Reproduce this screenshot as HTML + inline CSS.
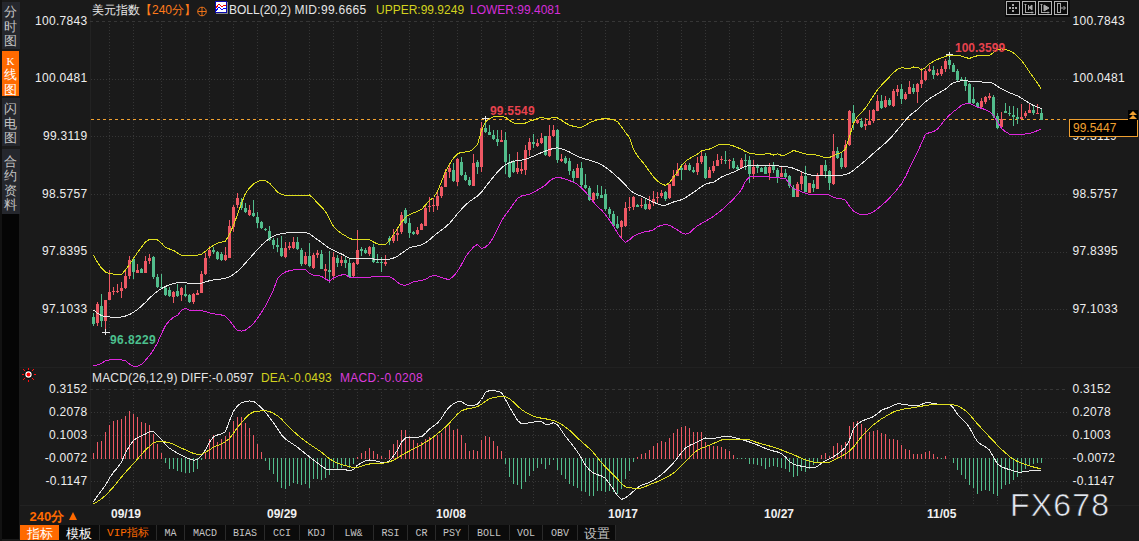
<!DOCTYPE html>
<html><head><meta charset="utf-8">
<style>
html,body{margin:0;padding:0;}
body{width:1139px;height:541px;overflow:hidden;background:#1a1a1a;position:relative;font-family:"Liberation Sans",sans-serif;}
.a{position:absolute;white-space:nowrap;}
.lbl{position:absolute;font-size:12px;color:#eeeeee;line-height:14px;letter-spacing:0.3px;}
.ll{position:absolute;left:0;width:87.5px;text-align:right;font-size:12px;color:#eeeeee;line-height:14px;letter-spacing:0.3px;}
.side{position:absolute;left:2px;width:18px;text-indent:-2px;background:#25272d;color:#c4c4c4;font-size:12px;line-height:14px;text-align:center;}
.tb{position:absolute;top:525px;height:15px;background:#0b0b0b;color:#c4c4c4;font-family:"Liberation Mono",monospace;font-size:10px;line-height:17px;text-align:center;border-right:1px solid #2a2a2a;box-sizing:border-box;}
</style></head><body>
<div class="a" style="left:0;top:0;width:2px;height:541px;background:#121212"></div>
<div class="a" style="left:2px;top:2px;width:18px;height:47px;background:#25272d"></div>
<div class="a" style="left:2px;top:51px;width:17px;height:45px;background:#ff6a00"></div>
<div class="a" style="left:2px;top:98px;width:18px;height:48px;background:#25272d"></div>
<div class="a" style="left:2px;top:149px;width:18px;height:65px;background:#25272d"></div>
<div class="a" style="left:4px;top:6.2px;font-size:12.5px;line-height:12px;color:#c4c4c4">分</div>
<div class="a" style="left:4px;top:20.5px;font-size:12.5px;line-height:12px;color:#c4c4c4">时</div>
<div class="a" style="left:4px;top:34.8px;font-size:12.5px;line-height:12px;color:#c4c4c4">图</div>
<div class="a" style="left:4px;top:68.9px;font-size:12.5px;line-height:12px;color:#fff">线</div>
<div class="a" style="left:4px;top:83.5px;font-size:12.5px;line-height:12px;color:#fff">图</div>
<div class="a" style="left:4px;top:103.4px;font-size:12.5px;line-height:12px;color:#c4c4c4">闪</div>
<div class="a" style="left:4px;top:117.6px;font-size:12.5px;line-height:12px;color:#c4c4c4">电</div>
<div class="a" style="left:4px;top:131.8px;font-size:12.5px;line-height:12px;color:#c4c4c4">图</div>
<div class="a" style="left:4px;top:156.1px;font-size:12.5px;line-height:12px;color:#c4c4c4">合</div>
<div class="a" style="left:4px;top:170.3px;font-size:12.5px;line-height:12px;color:#c4c4c4">约</div>
<div class="a" style="left:4px;top:184.5px;font-size:12.5px;line-height:12px;color:#c4c4c4">资</div>
<div class="a" style="left:4px;top:198.7px;font-size:12.5px;line-height:12px;color:#c4c4c4">料</div>
<div class="a" style="left:6.5px;top:55px;font-family:'Liberation Serif',serif;font-size:11px;line-height:12px;color:#fff">K</div>
<div class="a" style="left:2px;top:214px;width:17px;height:325px;background:#050505"></div>

<svg class="a" style="left:0;top:0" width="1139" height="541" shape-rendering="crispEdges">
<line x1="90.5" y1="10" x2="90.5" y2="505" stroke="#222"/>
<line x1="20" y1="367.5" x2="1139" y2="367.5" stroke="#212121"/>
<line x1="20" y1="505.5" x2="1139" y2="505.5" stroke="#222"/>
<g>
<line x1="90" y1="21.5" x2="1067" y2="21.5" stroke="#363636" stroke-dasharray="3 3"/>
<line x1="91" y1="79.5" x2="1067" y2="79.5" stroke="#363636" stroke-dasharray="1 2"/>
<line x1="91" y1="136.5" x2="1067" y2="136.5" stroke="#363636" stroke-dasharray="1 2"/>
<line x1="91" y1="194.5" x2="1067" y2="194.5" stroke="#363636" stroke-dasharray="1 2"/>
<line x1="91" y1="252.5" x2="1067" y2="252.5" stroke="#363636" stroke-dasharray="1 2"/>
<line x1="91" y1="309.5" x2="1067" y2="309.5" stroke="#363636" stroke-dasharray="1 2"/>
<line x1="90" y1="389.5" x2="1067" y2="389.5" stroke="#363636" stroke-dasharray="3 3"/>
<line x1="91" y1="412.5" x2="1067" y2="412.5" stroke="#363636" stroke-dasharray="1 2"/>
<line x1="91" y1="435.5" x2="1067" y2="435.5" stroke="#363636" stroke-dasharray="1 2"/>
<line x1="91" y1="458.5" x2="1067" y2="458.5" stroke="#363636" stroke-dasharray="1 2"/>
<line x1="91" y1="481.5" x2="1067" y2="481.5" stroke="#363636" stroke-dasharray="1 2"/>
<line x1="109.5" y1="21" x2="109.5" y2="366" stroke="#363636" stroke-dasharray="1 2"/>
<line x1="109.5" y1="389" x2="109.5" y2="505" stroke="#363636" stroke-dasharray="1 2"/>
<line x1="133.5" y1="21" x2="133.5" y2="366" stroke="#363636" stroke-dasharray="1 2"/>
<line x1="133.5" y1="389" x2="133.5" y2="505" stroke="#363636" stroke-dasharray="1 2"/>
<line x1="161.5" y1="21" x2="161.5" y2="366" stroke="#363636" stroke-dasharray="1 2"/>
<line x1="161.5" y1="389" x2="161.5" y2="505" stroke="#363636" stroke-dasharray="1 2"/>
<line x1="185.5" y1="21" x2="185.5" y2="366" stroke="#363636" stroke-dasharray="1 2"/>
<line x1="185.5" y1="389" x2="185.5" y2="505" stroke="#363636" stroke-dasharray="1 2"/>
<line x1="209.5" y1="21" x2="209.5" y2="366" stroke="#363636" stroke-dasharray="1 2"/>
<line x1="209.5" y1="389" x2="209.5" y2="505" stroke="#363636" stroke-dasharray="1 2"/>
<line x1="233.5" y1="21" x2="233.5" y2="366" stroke="#363636" stroke-dasharray="1 2"/>
<line x1="233.5" y1="389" x2="233.5" y2="505" stroke="#363636" stroke-dasharray="1 2"/>
<line x1="257.5" y1="21" x2="257.5" y2="366" stroke="#363636" stroke-dasharray="1 2"/>
<line x1="257.5" y1="389" x2="257.5" y2="505" stroke="#363636" stroke-dasharray="1 2"/>
<line x1="285.5" y1="21" x2="285.5" y2="366" stroke="#363636" stroke-dasharray="1 2"/>
<line x1="285.5" y1="389" x2="285.5" y2="505" stroke="#363636" stroke-dasharray="1 2"/>
<line x1="309.5" y1="21" x2="309.5" y2="366" stroke="#363636" stroke-dasharray="1 2"/>
<line x1="309.5" y1="389" x2="309.5" y2="505" stroke="#363636" stroke-dasharray="1 2"/>
<line x1="333.5" y1="21" x2="333.5" y2="366" stroke="#363636" stroke-dasharray="1 2"/>
<line x1="333.5" y1="389" x2="333.5" y2="505" stroke="#363636" stroke-dasharray="1 2"/>
<line x1="357.5" y1="21" x2="357.5" y2="366" stroke="#363636" stroke-dasharray="1 2"/>
<line x1="357.5" y1="389" x2="357.5" y2="505" stroke="#363636" stroke-dasharray="1 2"/>
<line x1="381.5" y1="21" x2="381.5" y2="366" stroke="#363636" stroke-dasharray="1 2"/>
<line x1="381.5" y1="389" x2="381.5" y2="505" stroke="#363636" stroke-dasharray="1 2"/>
<line x1="409.5" y1="21" x2="409.5" y2="366" stroke="#363636" stroke-dasharray="1 2"/>
<line x1="409.5" y1="389" x2="409.5" y2="505" stroke="#363636" stroke-dasharray="1 2"/>
<line x1="433.5" y1="21" x2="433.5" y2="366" stroke="#363636" stroke-dasharray="1 2"/>
<line x1="433.5" y1="389" x2="433.5" y2="505" stroke="#363636" stroke-dasharray="1 2"/>
<line x1="457.5" y1="21" x2="457.5" y2="366" stroke="#363636" stroke-dasharray="1 2"/>
<line x1="457.5" y1="389" x2="457.5" y2="505" stroke="#363636" stroke-dasharray="1 2"/>
<line x1="481.5" y1="21" x2="481.5" y2="366" stroke="#363636" stroke-dasharray="1 2"/>
<line x1="481.5" y1="389" x2="481.5" y2="505" stroke="#363636" stroke-dasharray="1 2"/>
<line x1="505.5" y1="21" x2="505.5" y2="366" stroke="#363636" stroke-dasharray="1 2"/>
<line x1="505.5" y1="389" x2="505.5" y2="505" stroke="#363636" stroke-dasharray="1 2"/>
<line x1="533.5" y1="21" x2="533.5" y2="366" stroke="#363636" stroke-dasharray="1 2"/>
<line x1="533.5" y1="389" x2="533.5" y2="505" stroke="#363636" stroke-dasharray="1 2"/>
<line x1="557.5" y1="21" x2="557.5" y2="366" stroke="#363636" stroke-dasharray="1 2"/>
<line x1="557.5" y1="389" x2="557.5" y2="505" stroke="#363636" stroke-dasharray="1 2"/>
<line x1="581.5" y1="21" x2="581.5" y2="366" stroke="#363636" stroke-dasharray="1 2"/>
<line x1="581.5" y1="389" x2="581.5" y2="505" stroke="#363636" stroke-dasharray="1 2"/>
<line x1="605.5" y1="21" x2="605.5" y2="366" stroke="#363636" stroke-dasharray="1 2"/>
<line x1="605.5" y1="389" x2="605.5" y2="505" stroke="#363636" stroke-dasharray="1 2"/>
<line x1="629.5" y1="21" x2="629.5" y2="366" stroke="#363636" stroke-dasharray="1 2"/>
<line x1="629.5" y1="389" x2="629.5" y2="505" stroke="#363636" stroke-dasharray="1 2"/>
<line x1="657.5" y1="21" x2="657.5" y2="366" stroke="#363636" stroke-dasharray="1 2"/>
<line x1="657.5" y1="389" x2="657.5" y2="505" stroke="#363636" stroke-dasharray="1 2"/>
<line x1="681.5" y1="21" x2="681.5" y2="366" stroke="#363636" stroke-dasharray="1 2"/>
<line x1="681.5" y1="389" x2="681.5" y2="505" stroke="#363636" stroke-dasharray="1 2"/>
<line x1="705.5" y1="21" x2="705.5" y2="366" stroke="#363636" stroke-dasharray="1 2"/>
<line x1="705.5" y1="389" x2="705.5" y2="505" stroke="#363636" stroke-dasharray="1 2"/>
<line x1="729.5" y1="21" x2="729.5" y2="366" stroke="#363636" stroke-dasharray="1 2"/>
<line x1="729.5" y1="389" x2="729.5" y2="505" stroke="#363636" stroke-dasharray="1 2"/>
<line x1="753.5" y1="21" x2="753.5" y2="366" stroke="#363636" stroke-dasharray="1 2"/>
<line x1="753.5" y1="389" x2="753.5" y2="505" stroke="#363636" stroke-dasharray="1 2"/>
<line x1="781.5" y1="21" x2="781.5" y2="366" stroke="#363636" stroke-dasharray="1 2"/>
<line x1="781.5" y1="389" x2="781.5" y2="505" stroke="#363636" stroke-dasharray="1 2"/>
<line x1="805.5" y1="21" x2="805.5" y2="366" stroke="#363636" stroke-dasharray="1 2"/>
<line x1="805.5" y1="389" x2="805.5" y2="505" stroke="#363636" stroke-dasharray="1 2"/>
<line x1="829.5" y1="21" x2="829.5" y2="366" stroke="#363636" stroke-dasharray="1 2"/>
<line x1="829.5" y1="389" x2="829.5" y2="505" stroke="#363636" stroke-dasharray="1 2"/>
<line x1="853.5" y1="21" x2="853.5" y2="366" stroke="#363636" stroke-dasharray="1 2"/>
<line x1="853.5" y1="389" x2="853.5" y2="505" stroke="#363636" stroke-dasharray="1 2"/>
<line x1="877.5" y1="21" x2="877.5" y2="366" stroke="#363636" stroke-dasharray="1 2"/>
<line x1="877.5" y1="389" x2="877.5" y2="505" stroke="#363636" stroke-dasharray="1 2"/>
<line x1="901.5" y1="21" x2="901.5" y2="366" stroke="#363636" stroke-dasharray="1 2"/>
<line x1="901.5" y1="389" x2="901.5" y2="505" stroke="#363636" stroke-dasharray="1 2"/>
<line x1="925.5" y1="21" x2="925.5" y2="366" stroke="#363636" stroke-dasharray="1 2"/>
<line x1="925.5" y1="389" x2="925.5" y2="505" stroke="#363636" stroke-dasharray="1 2"/>
<line x1="949.5" y1="21" x2="949.5" y2="366" stroke="#363636" stroke-dasharray="1 2"/>
<line x1="949.5" y1="389" x2="949.5" y2="505" stroke="#363636" stroke-dasharray="1 2"/>
<line x1="973.5" y1="21" x2="973.5" y2="366" stroke="#363636" stroke-dasharray="1 2"/>
<line x1="973.5" y1="389" x2="973.5" y2="505" stroke="#363636" stroke-dasharray="1 2"/>
<line x1="997.5" y1="21" x2="997.5" y2="366" stroke="#363636" stroke-dasharray="1 2"/>
<line x1="997.5" y1="389" x2="997.5" y2="505" stroke="#363636" stroke-dasharray="1 2"/>
<line x1="1021.5" y1="21" x2="1021.5" y2="366" stroke="#363636" stroke-dasharray="1 2"/>
<line x1="1021.5" y1="389" x2="1021.5" y2="505" stroke="#363636" stroke-dasharray="1 2"/>
<line x1="91" y1="119.5" x2="1069" y2="119.5" stroke="#f0a030" stroke-dasharray="3 3"/>
<line x1="93.5" y1="313" x2="93.5" y2="326" stroke="#52bd8c"/>
<rect x="92" y="317" width="3" height="7" fill="#52bd8c"/>
<line x1="97.5" y1="302" x2="97.5" y2="326" stroke="#ee5864"/>
<rect x="96" y="304" width="3" height="19" fill="#ee5864"/>
<line x1="101.5" y1="294" x2="101.5" y2="327" stroke="#52bd8c"/>
<rect x="100" y="306" width="3" height="15" fill="#52bd8c"/>
<line x1="105.5" y1="300" x2="105.5" y2="332" stroke="#ee5864"/>
<rect x="104" y="300" width="3" height="21" fill="#ee5864"/>
<line x1="109.5" y1="270" x2="109.5" y2="300" stroke="#ee5864"/>
<rect x="108" y="292" width="3" height="8" fill="#ee5864"/>
<line x1="113.5" y1="287" x2="113.5" y2="295" stroke="#ee5864"/>
<rect x="112" y="291" width="3" height="1" fill="#ee5864"/>
<line x1="117.5" y1="284" x2="117.5" y2="293" stroke="#ee5864"/>
<rect x="116" y="291" width="3" height="1" fill="#ee5864"/>
<line x1="121.5" y1="282" x2="121.5" y2="298" stroke="#ee5864"/>
<rect x="120" y="288" width="3" height="3" fill="#ee5864"/>
<line x1="125.5" y1="271" x2="125.5" y2="289" stroke="#ee5864"/>
<rect x="124" y="276" width="3" height="12" fill="#ee5864"/>
<line x1="129.5" y1="256" x2="129.5" y2="279" stroke="#ee5864"/>
<rect x="128" y="260" width="3" height="16" fill="#ee5864"/>
<line x1="133.5" y1="258" x2="133.5" y2="279" stroke="#52bd8c"/>
<rect x="132" y="259" width="3" height="13" fill="#52bd8c"/>
<line x1="137.5" y1="264" x2="137.5" y2="273" stroke="#ee5864"/>
<rect x="136" y="270" width="3" height="3" fill="#ee5864"/>
<line x1="141.5" y1="268" x2="141.5" y2="273" stroke="#52bd8c"/>
<rect x="140" y="269" width="3" height="4" fill="#52bd8c"/>
<line x1="145.5" y1="256" x2="145.5" y2="273" stroke="#ee5864"/>
<rect x="144" y="261" width="3" height="12" fill="#ee5864"/>
<line x1="149.5" y1="254" x2="149.5" y2="264" stroke="#ee5864"/>
<rect x="148" y="258" width="3" height="3" fill="#ee5864"/>
<line x1="153.5" y1="256" x2="153.5" y2="279" stroke="#52bd8c"/>
<rect x="152" y="257" width="3" height="20" fill="#52bd8c"/>
<line x1="157.5" y1="274" x2="157.5" y2="288" stroke="#52bd8c"/>
<rect x="156" y="277" width="3" height="10" fill="#52bd8c"/>
<line x1="161.5" y1="274" x2="161.5" y2="288" stroke="#52bd8c"/>
<rect x="160" y="287" width="3" height="1" fill="#52bd8c"/>
<line x1="165.5" y1="287" x2="165.5" y2="296" stroke="#52bd8c"/>
<rect x="164" y="288" width="3" height="7" fill="#52bd8c"/>
<line x1="169.5" y1="287" x2="169.5" y2="297" stroke="#52bd8c"/>
<rect x="168" y="290" width="3" height="6" fill="#52bd8c"/>
<line x1="173.5" y1="291" x2="173.5" y2="303" stroke="#ee5864"/>
<rect x="172" y="292" width="3" height="5" fill="#ee5864"/>
<line x1="177.5" y1="284" x2="177.5" y2="297" stroke="#52bd8c"/>
<rect x="176" y="291" width="3" height="5" fill="#52bd8c"/>
<line x1="181.5" y1="287" x2="181.5" y2="301" stroke="#ee5864"/>
<rect x="180" y="288" width="3" height="7" fill="#ee5864"/>
<line x1="185.5" y1="285" x2="185.5" y2="297" stroke="#52bd8c"/>
<rect x="184" y="294" width="3" height="2" fill="#52bd8c"/>
<line x1="189.5" y1="294" x2="189.5" y2="303" stroke="#52bd8c"/>
<rect x="188" y="295" width="3" height="7" fill="#52bd8c"/>
<line x1="193.5" y1="293" x2="193.5" y2="304" stroke="#ee5864"/>
<rect x="192" y="294" width="3" height="8" fill="#ee5864"/>
<line x1="197.5" y1="290" x2="197.5" y2="295" stroke="#ee5864"/>
<rect x="196" y="293" width="3" height="2" fill="#ee5864"/>
<line x1="201.5" y1="271" x2="201.5" y2="293" stroke="#ee5864"/>
<rect x="200" y="274" width="3" height="19" fill="#ee5864"/>
<line x1="205.5" y1="253" x2="205.5" y2="275" stroke="#ee5864"/>
<rect x="204" y="258" width="3" height="16" fill="#ee5864"/>
<line x1="209.5" y1="246" x2="209.5" y2="258" stroke="#ee5864"/>
<rect x="208" y="250" width="3" height="6" fill="#ee5864"/>
<line x1="213.5" y1="247" x2="213.5" y2="254" stroke="#52bd8c"/>
<rect x="212" y="250" width="3" height="2" fill="#52bd8c"/>
<line x1="217.5" y1="251" x2="217.5" y2="260" stroke="#52bd8c"/>
<rect x="216" y="252" width="3" height="7" fill="#52bd8c"/>
<line x1="221.5" y1="252" x2="221.5" y2="261" stroke="#52bd8c"/>
<rect x="220" y="254" width="3" height="6" fill="#52bd8c"/>
<line x1="225.5" y1="247" x2="225.5" y2="261" stroke="#ee5864"/>
<rect x="224" y="255" width="3" height="5" fill="#ee5864"/>
<line x1="229.5" y1="220" x2="229.5" y2="258" stroke="#ee5864"/>
<rect x="228" y="226" width="3" height="32" fill="#ee5864"/>
<line x1="233.5" y1="205" x2="233.5" y2="232" stroke="#ee5864"/>
<rect x="232" y="207" width="3" height="20" fill="#ee5864"/>
<line x1="237.5" y1="193" x2="237.5" y2="208" stroke="#ee5864"/>
<rect x="236" y="198" width="3" height="7" fill="#ee5864"/>
<line x1="241.5" y1="198" x2="241.5" y2="210" stroke="#52bd8c"/>
<rect x="240" y="202" width="3" height="6" fill="#52bd8c"/>
<line x1="245.5" y1="203" x2="245.5" y2="213" stroke="#52bd8c"/>
<rect x="244" y="208" width="3" height="4" fill="#52bd8c"/>
<line x1="249.5" y1="205" x2="249.5" y2="216" stroke="#ee5864"/>
<rect x="248" y="210" width="3" height="5" fill="#ee5864"/>
<line x1="253.5" y1="200" x2="253.5" y2="217" stroke="#52bd8c"/>
<rect x="252" y="213" width="3" height="3" fill="#52bd8c"/>
<line x1="257.5" y1="212" x2="257.5" y2="228" stroke="#52bd8c"/>
<rect x="256" y="217" width="3" height="6" fill="#52bd8c"/>
<line x1="261.5" y1="221" x2="261.5" y2="229" stroke="#52bd8c"/>
<rect x="260" y="222" width="3" height="6" fill="#52bd8c"/>
<line x1="265.5" y1="228" x2="265.5" y2="231" stroke="#52bd8c"/>
<rect x="264" y="229" width="3" height="1" fill="#52bd8c"/>
<line x1="269.5" y1="226" x2="269.5" y2="241" stroke="#52bd8c"/>
<rect x="268" y="231" width="3" height="9" fill="#52bd8c"/>
<line x1="273.5" y1="238" x2="273.5" y2="249" stroke="#52bd8c"/>
<rect x="272" y="240" width="3" height="5" fill="#52bd8c"/>
<line x1="277.5" y1="238" x2="277.5" y2="252" stroke="#52bd8c"/>
<rect x="276" y="245" width="3" height="2" fill="#52bd8c"/>
<line x1="281.5" y1="236" x2="281.5" y2="257" stroke="#52bd8c"/>
<rect x="280" y="248" width="3" height="8" fill="#52bd8c"/>
<line x1="285.5" y1="242" x2="285.5" y2="258" stroke="#ee5864"/>
<rect x="284" y="248" width="3" height="9" fill="#ee5864"/>
<line x1="289.5" y1="242" x2="289.5" y2="250" stroke="#ee5864"/>
<rect x="288" y="246" width="3" height="2" fill="#ee5864"/>
<line x1="293.5" y1="237" x2="293.5" y2="249" stroke="#ee5864"/>
<rect x="292" y="242" width="3" height="6" fill="#ee5864"/>
<line x1="297.5" y1="237" x2="297.5" y2="250" stroke="#52bd8c"/>
<rect x="296" y="242" width="3" height="7" fill="#52bd8c"/>
<line x1="301.5" y1="248" x2="301.5" y2="266" stroke="#52bd8c"/>
<rect x="300" y="250" width="3" height="14" fill="#52bd8c"/>
<line x1="305.5" y1="252" x2="305.5" y2="265" stroke="#ee5864"/>
<rect x="304" y="256" width="3" height="8" fill="#ee5864"/>
<line x1="309.5" y1="243" x2="309.5" y2="267" stroke="#52bd8c"/>
<rect x="308" y="256" width="3" height="10" fill="#52bd8c"/>
<line x1="313.5" y1="253" x2="313.5" y2="269" stroke="#ee5864"/>
<rect x="312" y="255" width="3" height="13" fill="#ee5864"/>
<line x1="317.5" y1="250" x2="317.5" y2="258" stroke="#ee5864"/>
<rect x="316" y="253" width="3" height="2" fill="#ee5864"/>
<line x1="321.5" y1="250" x2="321.5" y2="269" stroke="#52bd8c"/>
<rect x="320" y="254" width="3" height="15" fill="#52bd8c"/>
<line x1="325.5" y1="264" x2="325.5" y2="278" stroke="#ee5864"/>
<rect x="324" y="269" width="3" height="2" fill="#ee5864"/>
<line x1="329.5" y1="251" x2="329.5" y2="283" stroke="#52bd8c"/>
<rect x="328" y="270" width="3" height="2" fill="#52bd8c"/>
<line x1="333.5" y1="252" x2="333.5" y2="280" stroke="#ee5864"/>
<rect x="332" y="257" width="3" height="19" fill="#ee5864"/>
<line x1="337.5" y1="255" x2="337.5" y2="267" stroke="#52bd8c"/>
<rect x="336" y="258" width="3" height="5" fill="#52bd8c"/>
<line x1="341.5" y1="256" x2="341.5" y2="266" stroke="#ee5864"/>
<rect x="340" y="260" width="3" height="3" fill="#ee5864"/>
<line x1="345.5" y1="257" x2="345.5" y2="268" stroke="#52bd8c"/>
<rect x="344" y="260" width="3" height="3" fill="#52bd8c"/>
<line x1="349.5" y1="258" x2="349.5" y2="277" stroke="#52bd8c"/>
<rect x="348" y="263" width="3" height="14" fill="#52bd8c"/>
<line x1="353.5" y1="262" x2="353.5" y2="277" stroke="#ee5864"/>
<rect x="352" y="263" width="3" height="13" fill="#ee5864"/>
<line x1="357.5" y1="230" x2="357.5" y2="265" stroke="#ee5864"/>
<rect x="356" y="250" width="3" height="14" fill="#ee5864"/>
<line x1="361.5" y1="247" x2="361.5" y2="256" stroke="#52bd8c"/>
<rect x="360" y="249" width="3" height="2" fill="#52bd8c"/>
<line x1="365.5" y1="248" x2="365.5" y2="254" stroke="#52bd8c"/>
<rect x="364" y="250" width="3" height="3" fill="#52bd8c"/>
<line x1="369.5" y1="246" x2="369.5" y2="256" stroke="#ee5864"/>
<rect x="368" y="247" width="3" height="7" fill="#ee5864"/>
<line x1="373.5" y1="244" x2="373.5" y2="263" stroke="#52bd8c"/>
<rect x="372" y="247" width="3" height="15" fill="#52bd8c"/>
<line x1="377.5" y1="254" x2="377.5" y2="263" stroke="#52bd8c"/>
<rect x="376" y="262" width="3" height="1" fill="#52bd8c"/>
<line x1="381.5" y1="257" x2="381.5" y2="272" stroke="#52bd8c"/>
<rect x="380" y="262" width="3" height="1" fill="#52bd8c"/>
<line x1="385.5" y1="255" x2="385.5" y2="266" stroke="#ee5864"/>
<rect x="384" y="262" width="3" height="2" fill="#ee5864"/>
<line x1="389.5" y1="236" x2="389.5" y2="245" stroke="#52bd8c"/>
<rect x="388" y="238" width="3" height="3" fill="#52bd8c"/>
<line x1="393.5" y1="229" x2="393.5" y2="243" stroke="#ee5864"/>
<rect x="392" y="235" width="3" height="6" fill="#ee5864"/>
<line x1="397.5" y1="228" x2="397.5" y2="241" stroke="#ee5864"/>
<rect x="396" y="233" width="3" height="2" fill="#ee5864"/>
<line x1="401.5" y1="212" x2="401.5" y2="234" stroke="#ee5864"/>
<rect x="400" y="215" width="3" height="17" fill="#ee5864"/>
<line x1="405.5" y1="208" x2="405.5" y2="224" stroke="#52bd8c"/>
<rect x="404" y="210" width="3" height="13" fill="#52bd8c"/>
<line x1="409.5" y1="218" x2="409.5" y2="238" stroke="#52bd8c"/>
<rect x="408" y="223" width="3" height="10" fill="#52bd8c"/>
<line x1="413.5" y1="231" x2="413.5" y2="235" stroke="#52bd8c"/>
<rect x="412" y="232" width="3" height="2" fill="#52bd8c"/>
<line x1="417.5" y1="227" x2="417.5" y2="235" stroke="#ee5864"/>
<rect x="416" y="230" width="3" height="4" fill="#ee5864"/>
<line x1="421.5" y1="223" x2="421.5" y2="230" stroke="#ee5864"/>
<rect x="420" y="224" width="3" height="6" fill="#ee5864"/>
<line x1="425.5" y1="206" x2="425.5" y2="226" stroke="#ee5864"/>
<rect x="424" y="208" width="3" height="18" fill="#ee5864"/>
<line x1="429.5" y1="197" x2="429.5" y2="212" stroke="#ee5864"/>
<rect x="428" y="206" width="3" height="1" fill="#ee5864"/>
<line x1="433.5" y1="198" x2="433.5" y2="212" stroke="#ee5864"/>
<rect x="432" y="205" width="3" height="1" fill="#ee5864"/>
<line x1="437.5" y1="191" x2="437.5" y2="210" stroke="#ee5864"/>
<rect x="436" y="196" width="3" height="10" fill="#ee5864"/>
<line x1="441.5" y1="186" x2="441.5" y2="198" stroke="#ee5864"/>
<rect x="440" y="187" width="3" height="9" fill="#ee5864"/>
<line x1="445.5" y1="169" x2="445.5" y2="187" stroke="#ee5864"/>
<rect x="444" y="172" width="3" height="15" fill="#ee5864"/>
<line x1="449.5" y1="163" x2="449.5" y2="178" stroke="#ee5864"/>
<rect x="448" y="168" width="3" height="4" fill="#ee5864"/>
<line x1="453.5" y1="163" x2="453.5" y2="182" stroke="#52bd8c"/>
<rect x="452" y="170" width="3" height="11" fill="#52bd8c"/>
<line x1="457.5" y1="158" x2="457.5" y2="186" stroke="#ee5864"/>
<rect x="456" y="159" width="3" height="23" fill="#ee5864"/>
<line x1="461.5" y1="157" x2="461.5" y2="176" stroke="#52bd8c"/>
<rect x="460" y="162" width="3" height="13" fill="#52bd8c"/>
<line x1="465.5" y1="172" x2="465.5" y2="181" stroke="#52bd8c"/>
<rect x="464" y="175" width="3" height="5" fill="#52bd8c"/>
<line x1="469.5" y1="177" x2="469.5" y2="186" stroke="#52bd8c"/>
<rect x="468" y="180" width="3" height="5" fill="#52bd8c"/>
<line x1="473.5" y1="154" x2="473.5" y2="186" stroke="#ee5864"/>
<rect x="472" y="163" width="3" height="23" fill="#ee5864"/>
<line x1="477.5" y1="160" x2="477.5" y2="174" stroke="#52bd8c"/>
<rect x="476" y="162" width="3" height="5" fill="#52bd8c"/>
<line x1="481.5" y1="122" x2="481.5" y2="172" stroke="#ee5864"/>
<rect x="480" y="128" width="3" height="39" fill="#ee5864"/>
<line x1="485.5" y1="117" x2="485.5" y2="133" stroke="#52bd8c"/>
<rect x="484" y="128" width="3" height="4" fill="#52bd8c"/>
<line x1="489.5" y1="125" x2="489.5" y2="135" stroke="#52bd8c"/>
<rect x="488" y="132" width="3" height="3" fill="#52bd8c"/>
<line x1="493.5" y1="130" x2="493.5" y2="140" stroke="#52bd8c"/>
<rect x="492" y="135" width="3" height="4" fill="#52bd8c"/>
<line x1="497.5" y1="130" x2="497.5" y2="146" stroke="#52bd8c"/>
<rect x="496" y="139" width="3" height="3" fill="#52bd8c"/>
<line x1="501.5" y1="130" x2="501.5" y2="142" stroke="#ee5864"/>
<rect x="500" y="140" width="3" height="2" fill="#ee5864"/>
<line x1="505.5" y1="132" x2="505.5" y2="174" stroke="#52bd8c"/>
<rect x="504" y="140" width="3" height="22" fill="#52bd8c"/>
<line x1="509.5" y1="154" x2="509.5" y2="178" stroke="#52bd8c"/>
<rect x="508" y="162" width="3" height="15" fill="#52bd8c"/>
<line x1="513.5" y1="160" x2="513.5" y2="173" stroke="#52bd8c"/>
<rect x="512" y="161" width="3" height="11" fill="#52bd8c"/>
<line x1="517.5" y1="152" x2="517.5" y2="174" stroke="#ee5864"/>
<rect x="516" y="168" width="3" height="4" fill="#ee5864"/>
<line x1="521.5" y1="162" x2="521.5" y2="174" stroke="#ee5864"/>
<rect x="520" y="169" width="3" height="2" fill="#ee5864"/>
<line x1="525.5" y1="145" x2="525.5" y2="175" stroke="#ee5864"/>
<rect x="524" y="150" width="3" height="20" fill="#ee5864"/>
<line x1="529.5" y1="138" x2="529.5" y2="156" stroke="#ee5864"/>
<rect x="528" y="142" width="3" height="8" fill="#ee5864"/>
<line x1="533.5" y1="134" x2="533.5" y2="148" stroke="#52bd8c"/>
<rect x="532" y="142" width="3" height="2" fill="#52bd8c"/>
<line x1="537.5" y1="139" x2="537.5" y2="147" stroke="#ee5864"/>
<rect x="536" y="143" width="3" height="3" fill="#ee5864"/>
<line x1="541.5" y1="133" x2="541.5" y2="144" stroke="#ee5864"/>
<rect x="540" y="138" width="3" height="5" fill="#ee5864"/>
<line x1="545.5" y1="136" x2="545.5" y2="156" stroke="#52bd8c"/>
<rect x="544" y="136" width="3" height="19" fill="#52bd8c"/>
<line x1="549.5" y1="125" x2="549.5" y2="157" stroke="#ee5864"/>
<rect x="548" y="136" width="3" height="20" fill="#ee5864"/>
<line x1="553.5" y1="125" x2="553.5" y2="137" stroke="#ee5864"/>
<rect x="552" y="130" width="3" height="6" fill="#ee5864"/>
<line x1="557.5" y1="129" x2="557.5" y2="163" stroke="#52bd8c"/>
<rect x="556" y="130" width="3" height="30" fill="#52bd8c"/>
<line x1="561.5" y1="154" x2="561.5" y2="162" stroke="#ee5864"/>
<rect x="560" y="159" width="3" height="2" fill="#ee5864"/>
<line x1="565.5" y1="156" x2="565.5" y2="164" stroke="#52bd8c"/>
<rect x="564" y="158" width="3" height="5" fill="#52bd8c"/>
<line x1="569.5" y1="158" x2="569.5" y2="175" stroke="#52bd8c"/>
<rect x="568" y="161" width="3" height="10" fill="#52bd8c"/>
<line x1="573.5" y1="169" x2="573.5" y2="182" stroke="#52bd8c"/>
<rect x="572" y="171" width="3" height="7" fill="#52bd8c"/>
<line x1="577.5" y1="164" x2="577.5" y2="178" stroke="#ee5864"/>
<rect x="576" y="168" width="3" height="10" fill="#ee5864"/>
<line x1="581.5" y1="162" x2="581.5" y2="187" stroke="#52bd8c"/>
<rect x="580" y="168" width="3" height="17" fill="#52bd8c"/>
<line x1="585.5" y1="174" x2="585.5" y2="189" stroke="#52bd8c"/>
<rect x="584" y="185" width="3" height="3" fill="#52bd8c"/>
<line x1="589.5" y1="186" x2="589.5" y2="201" stroke="#52bd8c"/>
<rect x="588" y="188" width="3" height="12" fill="#52bd8c"/>
<line x1="593.5" y1="192" x2="593.5" y2="201" stroke="#ee5864"/>
<rect x="592" y="193" width="3" height="7" fill="#ee5864"/>
<line x1="597.5" y1="185" x2="597.5" y2="199" stroke="#52bd8c"/>
<rect x="596" y="193" width="3" height="3" fill="#52bd8c"/>
<line x1="601.5" y1="186" x2="601.5" y2="198" stroke="#52bd8c"/>
<rect x="600" y="195" width="3" height="3" fill="#52bd8c"/>
<line x1="605.5" y1="189" x2="605.5" y2="211" stroke="#52bd8c"/>
<rect x="604" y="194" width="3" height="15" fill="#52bd8c"/>
<line x1="609.5" y1="207" x2="609.5" y2="218" stroke="#52bd8c"/>
<rect x="608" y="209" width="3" height="5" fill="#52bd8c"/>
<line x1="613.5" y1="211" x2="613.5" y2="227" stroke="#52bd8c"/>
<rect x="612" y="214" width="3" height="12" fill="#52bd8c"/>
<line x1="617.5" y1="216" x2="617.5" y2="229" stroke="#52bd8c"/>
<rect x="616" y="224" width="3" height="4" fill="#52bd8c"/>
<line x1="621.5" y1="220" x2="621.5" y2="239" stroke="#ee5864"/>
<rect x="620" y="221" width="3" height="6" fill="#ee5864"/>
<line x1="625.5" y1="202" x2="625.5" y2="227" stroke="#ee5864"/>
<rect x="624" y="208" width="3" height="18" fill="#ee5864"/>
<line x1="629.5" y1="197" x2="629.5" y2="211" stroke="#ee5864"/>
<rect x="628" y="207" width="3" height="1" fill="#ee5864"/>
<line x1="633.5" y1="196" x2="633.5" y2="210" stroke="#ee5864"/>
<rect x="632" y="197" width="3" height="10" fill="#ee5864"/>
<line x1="637.5" y1="204" x2="637.5" y2="207" stroke="#52bd8c"/>
<rect x="636" y="205" width="3" height="2" fill="#52bd8c"/>
<line x1="641.5" y1="198" x2="641.5" y2="208" stroke="#ee5864"/>
<rect x="640" y="205" width="3" height="1" fill="#ee5864"/>
<line x1="645.5" y1="198" x2="645.5" y2="210" stroke="#52bd8c"/>
<rect x="644" y="204" width="3" height="5" fill="#52bd8c"/>
<line x1="649.5" y1="196" x2="649.5" y2="210" stroke="#ee5864"/>
<rect x="648" y="204" width="3" height="5" fill="#ee5864"/>
<line x1="653.5" y1="191" x2="653.5" y2="206" stroke="#ee5864"/>
<rect x="652" y="199" width="3" height="4" fill="#ee5864"/>
<line x1="657.5" y1="192" x2="657.5" y2="204" stroke="#ee5864"/>
<rect x="656" y="197" width="3" height="1" fill="#ee5864"/>
<line x1="661.5" y1="190" x2="661.5" y2="198" stroke="#ee5864"/>
<rect x="660" y="193" width="3" height="3" fill="#ee5864"/>
<line x1="665.5" y1="191" x2="665.5" y2="201" stroke="#52bd8c"/>
<rect x="664" y="192" width="3" height="7" fill="#52bd8c"/>
<line x1="669.5" y1="184" x2="669.5" y2="199" stroke="#ee5864"/>
<rect x="668" y="184" width="3" height="14" fill="#ee5864"/>
<line x1="673.5" y1="170" x2="673.5" y2="186" stroke="#ee5864"/>
<rect x="672" y="176" width="3" height="10" fill="#ee5864"/>
<line x1="677.5" y1="163" x2="677.5" y2="176" stroke="#ee5864"/>
<rect x="676" y="170" width="3" height="6" fill="#ee5864"/>
<line x1="681.5" y1="164" x2="681.5" y2="180" stroke="#52bd8c"/>
<rect x="680" y="168" width="3" height="2" fill="#52bd8c"/>
<line x1="685.5" y1="163" x2="685.5" y2="170" stroke="#ee5864"/>
<rect x="684" y="165" width="3" height="5" fill="#ee5864"/>
<line x1="689.5" y1="163" x2="689.5" y2="171" stroke="#52bd8c"/>
<rect x="688" y="165" width="3" height="5" fill="#52bd8c"/>
<line x1="693.5" y1="167" x2="693.5" y2="173" stroke="#52bd8c"/>
<rect x="692" y="170" width="3" height="2" fill="#52bd8c"/>
<line x1="697.5" y1="157" x2="697.5" y2="175" stroke="#ee5864"/>
<rect x="696" y="163" width="3" height="9" fill="#ee5864"/>
<line x1="701.5" y1="152" x2="701.5" y2="164" stroke="#ee5864"/>
<rect x="700" y="156" width="3" height="6" fill="#ee5864"/>
<line x1="705.5" y1="153" x2="705.5" y2="179" stroke="#52bd8c"/>
<rect x="704" y="156" width="3" height="22" fill="#52bd8c"/>
<line x1="709.5" y1="167" x2="709.5" y2="178" stroke="#ee5864"/>
<rect x="708" y="170" width="3" height="8" fill="#ee5864"/>
<line x1="713.5" y1="161" x2="713.5" y2="173" stroke="#ee5864"/>
<rect x="712" y="166" width="3" height="5" fill="#ee5864"/>
<line x1="717.5" y1="154" x2="717.5" y2="166" stroke="#ee5864"/>
<rect x="716" y="160" width="3" height="6" fill="#ee5864"/>
<line x1="721.5" y1="156" x2="721.5" y2="164" stroke="#ee5864"/>
<rect x="720" y="159" width="3" height="1" fill="#ee5864"/>
<line x1="725.5" y1="151" x2="725.5" y2="164" stroke="#52bd8c"/>
<rect x="724" y="160" width="3" height="1" fill="#52bd8c"/>
<line x1="729.5" y1="159" x2="729.5" y2="169" stroke="#ee5864"/>
<rect x="728" y="160" width="3" height="1" fill="#ee5864"/>
<line x1="733.5" y1="158" x2="733.5" y2="169" stroke="#52bd8c"/>
<rect x="732" y="161" width="3" height="7" fill="#52bd8c"/>
<line x1="737.5" y1="165" x2="737.5" y2="170" stroke="#52bd8c"/>
<rect x="736" y="167" width="3" height="2" fill="#52bd8c"/>
<line x1="741.5" y1="158" x2="741.5" y2="169" stroke="#ee5864"/>
<rect x="740" y="160" width="3" height="8" fill="#ee5864"/>
<line x1="745.5" y1="154" x2="745.5" y2="170" stroke="#52bd8c"/>
<rect x="744" y="160" width="3" height="1" fill="#52bd8c"/>
<line x1="749.5" y1="156" x2="749.5" y2="183" stroke="#52bd8c"/>
<rect x="748" y="160" width="3" height="14" fill="#52bd8c"/>
<line x1="753.5" y1="160" x2="753.5" y2="179" stroke="#ee5864"/>
<rect x="752" y="167" width="3" height="7" fill="#ee5864"/>
<line x1="757.5" y1="164" x2="757.5" y2="173" stroke="#52bd8c"/>
<rect x="756" y="166" width="3" height="2" fill="#52bd8c"/>
<line x1="761.5" y1="167" x2="761.5" y2="172" stroke="#52bd8c"/>
<rect x="760" y="168" width="3" height="4" fill="#52bd8c"/>
<line x1="765.5" y1="165" x2="765.5" y2="174" stroke="#52bd8c"/>
<rect x="764" y="167" width="3" height="7" fill="#52bd8c"/>
<line x1="769.5" y1="163" x2="769.5" y2="180" stroke="#ee5864"/>
<rect x="768" y="167" width="3" height="6" fill="#ee5864"/>
<line x1="773.5" y1="162" x2="773.5" y2="173" stroke="#52bd8c"/>
<rect x="772" y="166" width="3" height="4" fill="#52bd8c"/>
<line x1="777.5" y1="168" x2="777.5" y2="183" stroke="#52bd8c"/>
<rect x="776" y="170" width="3" height="8" fill="#52bd8c"/>
<line x1="781.5" y1="167" x2="781.5" y2="177" stroke="#ee5864"/>
<rect x="780" y="173" width="3" height="4" fill="#ee5864"/>
<line x1="785.5" y1="169" x2="785.5" y2="178" stroke="#52bd8c"/>
<rect x="784" y="173" width="3" height="4" fill="#52bd8c"/>
<line x1="789.5" y1="175" x2="789.5" y2="188" stroke="#52bd8c"/>
<rect x="788" y="176" width="3" height="10" fill="#52bd8c"/>
<line x1="793.5" y1="185" x2="793.5" y2="197" stroke="#52bd8c"/>
<rect x="792" y="188" width="3" height="9" fill="#52bd8c"/>
<line x1="797.5" y1="182" x2="797.5" y2="197" stroke="#ee5864"/>
<rect x="796" y="184" width="3" height="13" fill="#ee5864"/>
<line x1="801.5" y1="172" x2="801.5" y2="190" stroke="#ee5864"/>
<rect x="800" y="176" width="3" height="8" fill="#ee5864"/>
<line x1="805.5" y1="166" x2="805.5" y2="192" stroke="#52bd8c"/>
<rect x="804" y="176" width="3" height="16" fill="#52bd8c"/>
<line x1="809.5" y1="183" x2="809.5" y2="193" stroke="#ee5864"/>
<rect x="808" y="183" width="3" height="10" fill="#ee5864"/>
<line x1="813.5" y1="180" x2="813.5" y2="192" stroke="#52bd8c"/>
<rect x="812" y="184" width="3" height="4" fill="#52bd8c"/>
<line x1="817.5" y1="173" x2="817.5" y2="189" stroke="#ee5864"/>
<rect x="816" y="176" width="3" height="13" fill="#ee5864"/>
<line x1="821.5" y1="165" x2="821.5" y2="175" stroke="#ee5864"/>
<rect x="820" y="165" width="3" height="10" fill="#ee5864"/>
<line x1="825.5" y1="160" x2="825.5" y2="178" stroke="#52bd8c"/>
<rect x="824" y="165" width="3" height="6" fill="#52bd8c"/>
<line x1="829.5" y1="170" x2="829.5" y2="190" stroke="#52bd8c"/>
<rect x="828" y="171" width="3" height="12" fill="#52bd8c"/>
<line x1="833.5" y1="134" x2="833.5" y2="185" stroke="#ee5864"/>
<rect x="832" y="151" width="3" height="33" fill="#ee5864"/>
<line x1="837.5" y1="147" x2="837.5" y2="159" stroke="#52bd8c"/>
<rect x="836" y="151" width="3" height="7" fill="#52bd8c"/>
<line x1="841.5" y1="152" x2="841.5" y2="169" stroke="#52bd8c"/>
<rect x="840" y="158" width="3" height="9" fill="#52bd8c"/>
<line x1="845.5" y1="140" x2="845.5" y2="168" stroke="#ee5864"/>
<rect x="844" y="145" width="3" height="22" fill="#ee5864"/>
<line x1="849.5" y1="110" x2="849.5" y2="146" stroke="#ee5864"/>
<rect x="848" y="111" width="3" height="34" fill="#ee5864"/>
<line x1="853.5" y1="105" x2="853.5" y2="130" stroke="#52bd8c"/>
<rect x="852" y="113" width="3" height="10" fill="#52bd8c"/>
<line x1="857.5" y1="119" x2="857.5" y2="124" stroke="#ee5864"/>
<rect x="856" y="120" width="3" height="3" fill="#ee5864"/>
<line x1="861.5" y1="118" x2="861.5" y2="128" stroke="#52bd8c"/>
<rect x="860" y="121" width="3" height="6" fill="#52bd8c"/>
<line x1="865.5" y1="118" x2="865.5" y2="130" stroke="#ee5864"/>
<rect x="864" y="124" width="3" height="2" fill="#ee5864"/>
<line x1="869.5" y1="110" x2="869.5" y2="125" stroke="#ee5864"/>
<rect x="868" y="121" width="3" height="4" fill="#ee5864"/>
<line x1="873.5" y1="109" x2="873.5" y2="123" stroke="#ee5864"/>
<rect x="872" y="110" width="3" height="11" fill="#ee5864"/>
<line x1="877.5" y1="95" x2="877.5" y2="111" stroke="#ee5864"/>
<rect x="876" y="101" width="3" height="10" fill="#ee5864"/>
<line x1="881.5" y1="95" x2="881.5" y2="109" stroke="#52bd8c"/>
<rect x="880" y="101" width="3" height="7" fill="#52bd8c"/>
<line x1="885.5" y1="96" x2="885.5" y2="108" stroke="#ee5864"/>
<rect x="884" y="100" width="3" height="7" fill="#ee5864"/>
<line x1="889.5" y1="98" x2="889.5" y2="106" stroke="#52bd8c"/>
<rect x="888" y="100" width="3" height="5" fill="#52bd8c"/>
<line x1="893.5" y1="89" x2="893.5" y2="107" stroke="#ee5864"/>
<rect x="892" y="91" width="3" height="15" fill="#ee5864"/>
<line x1="897.5" y1="85" x2="897.5" y2="96" stroke="#ee5864"/>
<rect x="896" y="89" width="3" height="3" fill="#ee5864"/>
<line x1="901.5" y1="84" x2="901.5" y2="104" stroke="#52bd8c"/>
<rect x="900" y="89" width="3" height="10" fill="#52bd8c"/>
<line x1="905.5" y1="92" x2="905.5" y2="100" stroke="#ee5864"/>
<rect x="904" y="94" width="3" height="5" fill="#ee5864"/>
<line x1="909.5" y1="81" x2="909.5" y2="94" stroke="#ee5864"/>
<rect x="908" y="87" width="3" height="7" fill="#ee5864"/>
<line x1="913.5" y1="84" x2="913.5" y2="94" stroke="#52bd8c"/>
<rect x="912" y="88" width="3" height="4" fill="#52bd8c"/>
<line x1="917.5" y1="83" x2="917.5" y2="103" stroke="#ee5864"/>
<rect x="916" y="84" width="3" height="8" fill="#ee5864"/>
<line x1="921.5" y1="68" x2="921.5" y2="88" stroke="#ee5864"/>
<rect x="920" y="80" width="3" height="4" fill="#ee5864"/>
<line x1="925.5" y1="69" x2="925.5" y2="81" stroke="#ee5864"/>
<rect x="924" y="71" width="3" height="9" fill="#ee5864"/>
<line x1="929.5" y1="65" x2="929.5" y2="72" stroke="#ee5864"/>
<rect x="928" y="69" width="3" height="2" fill="#ee5864"/>
<line x1="933.5" y1="66" x2="933.5" y2="79" stroke="#52bd8c"/>
<rect x="932" y="70" width="3" height="5" fill="#52bd8c"/>
<line x1="937.5" y1="69" x2="937.5" y2="76" stroke="#ee5864"/>
<rect x="936" y="73" width="3" height="2" fill="#ee5864"/>
<line x1="941.5" y1="66" x2="941.5" y2="76" stroke="#ee5864"/>
<rect x="940" y="69" width="3" height="5" fill="#ee5864"/>
<line x1="945.5" y1="59" x2="945.5" y2="72" stroke="#ee5864"/>
<rect x="944" y="61" width="3" height="8" fill="#ee5864"/>
<line x1="949.5" y1="53" x2="949.5" y2="69" stroke="#52bd8c"/>
<rect x="948" y="60" width="3" height="5" fill="#52bd8c"/>
<line x1="953.5" y1="63" x2="953.5" y2="72" stroke="#52bd8c"/>
<rect x="952" y="65" width="3" height="7" fill="#52bd8c"/>
<line x1="957.5" y1="69" x2="957.5" y2="81" stroke="#52bd8c"/>
<rect x="956" y="71" width="3" height="9" fill="#52bd8c"/>
<line x1="961.5" y1="77" x2="961.5" y2="81" stroke="#52bd8c"/>
<rect x="960" y="79" width="3" height="1" fill="#52bd8c"/>
<line x1="965.5" y1="77" x2="965.5" y2="91" stroke="#52bd8c"/>
<rect x="964" y="80" width="3" height="6" fill="#52bd8c"/>
<line x1="969.5" y1="83" x2="969.5" y2="103" stroke="#52bd8c"/>
<rect x="968" y="84" width="3" height="19" fill="#52bd8c"/>
<line x1="973.5" y1="87" x2="973.5" y2="104" stroke="#52bd8c"/>
<rect x="972" y="99" width="3" height="4" fill="#52bd8c"/>
<line x1="977.5" y1="102" x2="977.5" y2="108" stroke="#52bd8c"/>
<rect x="976" y="103" width="3" height="4" fill="#52bd8c"/>
<line x1="981.5" y1="98" x2="981.5" y2="108" stroke="#ee5864"/>
<rect x="980" y="101" width="3" height="6" fill="#ee5864"/>
<line x1="985.5" y1="96" x2="985.5" y2="104" stroke="#ee5864"/>
<rect x="984" y="97" width="3" height="5" fill="#ee5864"/>
<line x1="989.5" y1="93" x2="989.5" y2="100" stroke="#ee5864"/>
<rect x="988" y="96" width="3" height="2" fill="#ee5864"/>
<line x1="993.5" y1="95" x2="993.5" y2="118" stroke="#52bd8c"/>
<rect x="992" y="97" width="3" height="19" fill="#52bd8c"/>
<line x1="997.5" y1="113" x2="997.5" y2="129" stroke="#52bd8c"/>
<rect x="996" y="116" width="3" height="12" fill="#52bd8c"/>
<line x1="1001.5" y1="112" x2="1001.5" y2="127" stroke="#ee5864"/>
<rect x="1000" y="119" width="3" height="8" fill="#ee5864"/>
<line x1="1005.5" y1="103" x2="1005.5" y2="113" stroke="#52bd8c"/>
<rect x="1004" y="111" width="3" height="2" fill="#52bd8c"/>
<line x1="1009.5" y1="106" x2="1009.5" y2="116" stroke="#52bd8c"/>
<rect x="1008" y="113" width="3" height="1" fill="#52bd8c"/>
<line x1="1013.5" y1="106" x2="1013.5" y2="126" stroke="#52bd8c"/>
<rect x="1012" y="115" width="3" height="2" fill="#52bd8c"/>
<line x1="1017.5" y1="108" x2="1017.5" y2="124" stroke="#52bd8c"/>
<rect x="1016" y="117" width="3" height="2" fill="#52bd8c"/>
<line x1="1021.5" y1="104" x2="1021.5" y2="119" stroke="#ee5864"/>
<rect x="1020" y="117" width="3" height="2" fill="#ee5864"/>
<line x1="1025.5" y1="111" x2="1025.5" y2="118" stroke="#ee5864"/>
<rect x="1024" y="113" width="3" height="3" fill="#ee5864"/>
<line x1="1029.5" y1="104" x2="1029.5" y2="113" stroke="#ee5864"/>
<rect x="1028" y="110" width="3" height="3" fill="#ee5864"/>
<line x1="1033.5" y1="106" x2="1033.5" y2="115" stroke="#52bd8c"/>
<rect x="1032" y="110" width="3" height="3" fill="#52bd8c"/>
<line x1="1037.5" y1="104" x2="1037.5" y2="113" stroke="#ee5864"/>
<rect x="1036" y="113" width="3" height="1" fill="#ee5864"/>
<line x1="1041.5" y1="108" x2="1041.5" y2="120" stroke="#52bd8c"/>
<rect x="1040" y="113" width="3" height="7" fill="#52bd8c"/>
<path d="M485.5 116v5M482 118.5h7" stroke="#e8e8e8"/>
<path d="M949.5 52v5M946 54.5h7" stroke="#e8e8e8"/>
<path d="M105.5 329v6M102 332.5h8" stroke="#e8e8e8"/>
<polyline points="93.5,255.4 97.5,262.4 101.5,268.2 105.5,272.2 109.5,273.7 113.5,274.1 117.5,274.3 121.5,274.4 125.5,270.0 129.5,264.5 133.5,258.4 137.5,252.6 141.5,247.2 145.5,241.8 149.5,239.3 153.5,239.5 157.5,240.0 161.5,243.2 165.5,247.2 169.5,249.0 173.5,250.4 177.5,253.0 181.5,255.4 185.5,255.4 189.5,255.3 193.5,255.2 197.5,255.1 201.5,254.4 205.5,251.2 209.5,248.1 213.5,245.3 217.5,243.2 221.5,242.2 225.5,241.2 229.5,234.2 233.5,225.0 237.5,214.6 241.5,203.3 245.5,193.4 249.5,187.9 253.5,184.0 257.5,181.6 261.5,180.3 265.5,180.9 269.5,183.1 273.5,187.6 277.5,192.1 281.5,194.2 285.5,195.4 289.5,195.7 293.5,195.9 297.5,195.9 301.5,195.5 305.5,195.2 309.5,195.0 313.5,198.5 317.5,203.2 321.5,206.9 325.5,211.5 329.5,219.1 333.5,226.5 337.5,230.5 341.5,233.5 345.5,235.9 349.5,238.3 353.5,239.7 357.5,239.7 361.5,239.7 365.5,239.7 369.5,239.7 373.5,242.0 377.5,244.0 381.5,244.3 385.5,244.4 389.5,240.4 393.5,234.6 397.5,228.4 401.5,222.2 405.5,217.3 409.5,214.5 413.5,212.9 417.5,211.4 421.5,209.3 425.5,205.1 429.5,200.4 433.5,197.5 437.5,191.5 441.5,181.7 445.5,171.4 449.5,164.3 453.5,158.0 457.5,153.8 461.5,152.2 465.5,152.0 469.5,151.6 473.5,148.8 477.5,144.7 481.5,130.5 485.5,122.1 489.5,118.5 493.5,116.8 497.5,116.3 501.5,116.5 505.5,117.3 509.5,120.4 513.5,122.8 517.5,123.8 521.5,124.0 525.5,123.0 529.5,121.2 533.5,120.0 537.5,118.4 541.5,117.4 545.5,118.3 549.5,118.6 553.5,117.1 557.5,118.0 561.5,120.3 565.5,123.0 569.5,125.1 573.5,126.3 577.5,127.2 581.5,127.3 585.5,125.3 589.5,122.7 593.5,121.1 597.5,119.8 601.5,118.9 605.5,118.5 609.5,118.8 613.5,119.7 617.5,121.6 621.5,126.8 625.5,132.4 629.5,137.6 633.5,149.1 637.5,155.9 641.5,160.7 645.5,165.9 649.5,171.6 653.5,176.9 657.5,180.9 661.5,183.9 665.5,185.4 669.5,182.6 673.5,177.2 677.5,171.9 681.5,165.9 685.5,161.2 689.5,158.5 693.5,156.4 697.5,154.0 701.5,151.0 705.5,149.9 709.5,149.0 713.5,147.2 717.5,145.1 721.5,144.4 725.5,144.5 729.5,144.9 733.5,146.0 737.5,147.5 741.5,149.4 745.5,151.5 749.5,153.3 753.5,153.9 757.5,154.2 761.5,154.3 765.5,154.0 769.5,153.7 773.5,155.0 777.5,153.9 781.5,155.4 785.5,155.0 789.5,152.8 793.5,150.5 797.5,151.5 801.5,152.8 805.5,153.9 809.5,154.5 813.5,154.7 817.5,155.3 821.5,156.5 825.5,157.7 829.5,157.5 833.5,155.6 837.5,153.9 841.5,152.3 845.5,149.2 849.5,136.5 853.5,123.5 857.5,116.4 861.5,112.4 865.5,108.0 869.5,102.1 873.5,95.6 877.5,89.9 881.5,85.2 885.5,80.9 889.5,76.8 893.5,72.5 897.5,69.3 901.5,67.9 905.5,68.1 909.5,68.9 913.5,67.0 917.5,67.1 921.5,70.0 925.5,67.5 929.5,63.8 933.5,61.3 937.5,59.4 941.5,57.9 945.5,56.3 949.5,55.2 953.5,55.3 957.5,55.5 961.5,56.1 965.5,57.6 969.5,58.4 973.5,56.9 977.5,55.7 981.5,55.5 985.5,55.4 989.5,55.2 993.5,52.7 997.5,49.3 1001.5,49.0 1005.5,49.6 1009.5,50.8 1013.5,52.9 1017.5,56.2 1021.5,60.3 1025.5,66.0 1029.5,72.0 1033.5,77.5 1037.5,83.3 1041.3,89.1" fill="none" stroke="#dede1e" stroke-width="1"/>
<polyline points="93.5,310.0 97.5,313.2 101.5,315.6 105.5,316.8 109.5,317.0 113.5,317.2 117.5,317.3 121.5,317.0 125.5,316.0 129.5,314.5 133.5,312.3 137.5,309.5 141.5,306.0 145.5,302.3 149.5,298.1 153.5,294.4 157.5,291.2 161.5,288.6 165.5,286.4 169.5,284.9 173.5,283.5 177.5,282.7 181.5,282.7 185.5,282.9 189.5,283.2 193.5,283.5 197.5,283.6 201.5,283.1 205.5,281.9 209.5,280.7 213.5,280.0 217.5,279.5 221.5,279.0 225.5,278.3 229.5,276.8 233.5,274.3 237.5,271.3 241.5,267.4 245.5,263.0 249.5,258.5 253.5,253.9 257.5,249.4 261.5,245.2 265.5,241.5 269.5,238.5 273.5,236.1 277.5,234.5 281.5,233.7 285.5,233.1 289.5,232.7 293.5,232.4 297.5,232.4 301.5,232.4 305.5,232.4 309.5,233.7 313.5,236.8 317.5,239.6 321.5,242.4 325.5,245.5 329.5,248.3 333.5,250.4 337.5,252.3 341.5,254.0 345.5,256.1 349.5,258.3 353.5,258.7 357.5,258.7 361.5,258.7 365.5,258.7 369.5,258.7 373.5,259.0 377.5,260.0 381.5,259.9 385.5,259.8 389.5,259.3 393.5,258.0 397.5,256.2 401.5,253.4 405.5,250.5 409.5,247.8 413.5,246.6 417.5,245.9 421.5,244.9 425.5,242.8 429.5,239.8 433.5,236.3 437.5,232.9 441.5,230.0 445.5,226.9 449.5,223.3 453.5,218.6 457.5,213.7 461.5,209.2 465.5,204.9 469.5,201.5 473.5,198.8 477.5,196.0 481.5,192.0 485.5,186.9 489.5,181.7 493.5,176.9 497.5,172.1 501.5,167.8 505.5,164.8 509.5,162.7 513.5,161.3 517.5,160.6 521.5,160.1 525.5,159.1 529.5,157.7 533.5,156.1 537.5,154.4 541.5,152.6 545.5,151.0 549.5,149.6 553.5,148.4 557.5,147.8 561.5,148.7 565.5,150.3 569.5,152.0 573.5,154.2 577.5,156.3 581.5,157.9 585.5,159.1 589.5,160.2 593.5,161.5 597.5,162.9 601.5,164.7 605.5,167.2 609.5,170.3 613.5,173.6 617.5,177.2 621.5,181.1 625.5,185.1 629.5,189.5 633.5,192.9 637.5,194.9 641.5,196.3 645.5,198.1 649.5,200.2 653.5,202.2 657.5,203.8 661.5,205.1 665.5,205.1 669.5,203.6 673.5,202.0 677.5,200.9 681.5,199.7 685.5,197.7 689.5,195.1 693.5,192.4 697.5,189.4 701.5,186.7 705.5,184.1 709.5,183.0 713.5,182.3 717.5,179.8 721.5,176.9 725.5,175.2 729.5,173.7 733.5,172.1 737.5,170.4 741.5,168.1 745.5,166.3 749.5,165.7 753.5,165.5 757.5,165.5 761.5,165.5 765.5,165.6 769.5,165.7 773.5,165.8 777.5,165.9 781.5,166.2 785.5,166.6 789.5,167.2 793.5,168.3 797.5,170.0 801.5,171.8 805.5,173.7 809.5,174.8 813.5,175.4 817.5,175.6 821.5,175.7 825.5,175.7 829.5,175.8 833.5,175.8 837.5,175.7 841.5,175.2 845.5,174.5 849.5,173.0 853.5,170.3 857.5,167.0 861.5,163.8 865.5,160.5 869.5,156.9 873.5,153.2 877.5,149.7 881.5,146.4 885.5,143.0 889.5,139.2 893.5,134.7 897.5,129.9 901.5,125.2 905.5,120.2 909.5,115.7 913.5,112.4 917.5,109.4 921.5,105.2 925.5,101.7 929.5,98.7 933.5,96.1 937.5,93.8 941.5,91.5 945.5,89.1 949.5,85.5 953.5,82.7 957.5,81.5 961.5,80.8 965.5,80.9 969.5,81.1 973.5,81.5 977.5,81.8 981.5,82.0 985.5,82.1 989.5,82.2 993.5,83.6 997.5,86.5 1001.5,88.7 1005.5,90.8 1009.5,92.7 1013.5,94.2 1017.5,95.9 1021.5,98.2 1025.5,100.8 1029.5,103.3 1033.5,105.5 1037.5,107.3 1041.5,108.5 1041.6,108.5" fill="none" stroke="#e8e8e8" stroke-width="1"/>
<polyline points="93.5,365.7 97.5,364.9 101.5,363.4 105.5,360.5 109.5,359.9 113.5,359.9 117.5,359.9 121.5,359.9 125.5,360.7 129.5,364.1 133.5,366.4 137.5,366.1 141.5,364.3 145.5,360.3 149.5,355.5 153.5,349.8 157.5,342.8 161.5,333.8 165.5,325.4 169.5,320.6 173.5,317.2 177.5,315.5 181.5,310.3 185.5,308.4 189.5,310.2 193.5,310.4 197.5,310.5 201.5,310.7 205.5,311.5 209.5,313.0 213.5,313.8 217.5,314.3 221.5,315.0 225.5,316.3 229.5,320.3 233.5,326.0 237.5,330.7 241.5,331.1 245.5,330.0 249.5,327.1 253.5,323.5 257.5,318.1 261.5,312.3 265.5,306.0 269.5,298.4 273.5,289.7 277.5,278.8 281.5,274.2 285.5,272.0 289.5,270.7 293.5,270.0 297.5,269.7 301.5,269.7 305.5,269.7 309.5,273.5 313.5,275.3 317.5,275.6 321.5,276.4 325.5,279.0 329.5,281.0 333.5,278.0 337.5,276.2 341.5,275.0 345.5,274.6 349.5,277.2 353.5,277.4 357.5,277.4 361.5,277.4 365.5,277.4 369.5,277.4 373.5,276.0 377.5,276.0 381.5,276.0 385.5,276.0 389.5,276.6 393.5,279.0 397.5,282.3 401.5,284.8 405.5,285.3 409.5,283.7 413.5,281.9 417.5,281.1 421.5,280.5 425.5,279.4 429.5,276.9 433.5,275.4 437.5,276.1 441.5,277.6 445.5,278.9 449.5,279.3 453.5,276.3 457.5,271.2 461.5,264.6 465.5,256.9 469.5,251.5 473.5,247.1 477.5,244.3 481.5,248.6 485.5,247.2 489.5,243.3 493.5,237.2 497.5,229.1 501.5,220.9 505.5,214.8 509.5,209.5 513.5,203.9 517.5,198.4 521.5,196.0 525.5,195.2 529.5,194.1 533.5,192.2 537.5,190.0 541.5,187.7 545.5,185.1 549.5,181.1 553.5,178.4 557.5,177.3 561.5,178.0 565.5,179.3 569.5,180.6 573.5,182.2 577.5,184.4 581.5,188.0 585.5,192.0 589.5,196.6 593.5,202.1 597.5,206.7 601.5,210.1 605.5,214.7 609.5,220.1 613.5,226.3 617.5,233.0 621.5,238.5 625.5,242.2 629.5,239.8 633.5,236.1 637.5,234.2 641.5,232.8 645.5,231.7 649.5,231.0 653.5,229.8 657.5,226.8 661.5,225.2 665.5,224.7 669.5,225.2 673.5,227.6 677.5,230.0 681.5,232.7 685.5,234.3 689.5,232.8 693.5,229.1 697.5,225.8 701.5,223.4 705.5,221.2 709.5,218.9 713.5,216.3 717.5,213.3 721.5,210.1 725.5,206.5 729.5,202.8 733.5,198.9 737.5,194.6 741.5,189.6 745.5,181.3 749.5,177.1 753.5,176.6 757.5,176.6 761.5,176.6 765.5,176.7 769.5,177.1 773.5,177.6 777.5,177.9 781.5,178.1 785.5,178.5 789.5,183.9 793.5,188.8 797.5,190.1 801.5,191.8 805.5,193.2 809.5,194.3 813.5,195.0 817.5,194.9 821.5,194.7 825.5,194.5 829.5,195.1 833.5,197.2 837.5,198.3 841.5,198.9 845.5,200.1 849.5,206.2 853.5,211.1 857.5,213.5 861.5,214.7 865.5,214.5 869.5,213.6 873.5,211.8 877.5,208.7 881.5,205.5 885.5,201.9 889.5,197.9 893.5,193.6 897.5,189.0 901.5,183.7 905.5,176.7 909.5,168.3 913.5,160.0 917.5,152.1 921.5,143.2 925.5,134.2 929.5,132.6 933.5,131.7 937.5,129.1 941.5,124.1 945.5,119.3 949.5,115.1 953.5,111.6 957.5,108.7 961.5,105.3 965.5,103.7 969.5,103.4 973.5,105.1 977.5,107.2 981.5,108.3 985.5,109.7 989.5,111.5 993.5,115.3 997.5,121.9 1001.5,128.4 1005.5,131.7 1009.5,134.1 1013.5,135.0 1017.5,134.9 1021.5,134.5 1025.5,134.0 1029.5,133.4 1033.5,132.2 1037.5,130.6 1041.3,128.7" fill="none" stroke="#dc26dc" stroke-width="1"/>
<line x1="93.5" y1="453" x2="93.5" y2="459" stroke="#ee5864"/>
<line x1="97.5" y1="442" x2="97.5" y2="459" stroke="#ee5864"/>
<line x1="101.5" y1="441" x2="101.5" y2="459" stroke="#ee5864"/>
<line x1="105.5" y1="432" x2="105.5" y2="459" stroke="#ee5864"/>
<line x1="109.5" y1="425" x2="109.5" y2="459" stroke="#ee5864"/>
<line x1="113.5" y1="421" x2="113.5" y2="459" stroke="#ee5864"/>
<line x1="117.5" y1="420" x2="117.5" y2="459" stroke="#ee5864"/>
<line x1="121.5" y1="419" x2="121.5" y2="459" stroke="#ee5864"/>
<line x1="125.5" y1="416" x2="125.5" y2="459" stroke="#ee5864"/>
<line x1="129.5" y1="411" x2="129.5" y2="459" stroke="#ee5864"/>
<line x1="133.5" y1="414" x2="133.5" y2="459" stroke="#ee5864"/>
<line x1="137.5" y1="417" x2="137.5" y2="459" stroke="#ee5864"/>
<line x1="141.5" y1="422" x2="141.5" y2="459" stroke="#ee5864"/>
<line x1="145.5" y1="423" x2="145.5" y2="459" stroke="#ee5864"/>
<line x1="149.5" y1="425" x2="149.5" y2="459" stroke="#ee5864"/>
<line x1="153.5" y1="434" x2="153.5" y2="459" stroke="#ee5864"/>
<line x1="157.5" y1="444" x2="157.5" y2="459" stroke="#ee5864"/>
<line x1="161.5" y1="453" x2="161.5" y2="459" stroke="#ee5864"/>
<line x1="165.5" y1="458" x2="165.5" y2="463" stroke="#52bd8c"/>
<line x1="169.5" y1="458" x2="169.5" y2="469" stroke="#52bd8c"/>
<line x1="173.5" y1="458" x2="173.5" y2="469" stroke="#52bd8c"/>
<line x1="177.5" y1="458" x2="177.5" y2="471" stroke="#52bd8c"/>
<line x1="181.5" y1="458" x2="181.5" y2="472" stroke="#52bd8c"/>
<line x1="185.5" y1="458" x2="185.5" y2="473" stroke="#52bd8c"/>
<line x1="189.5" y1="458" x2="189.5" y2="473" stroke="#52bd8c"/>
<line x1="193.5" y1="458" x2="193.5" y2="472" stroke="#52bd8c"/>
<line x1="197.5" y1="458" x2="197.5" y2="469" stroke="#52bd8c"/>
<line x1="201.5" y1="458" x2="201.5" y2="460" stroke="#52bd8c"/>
<line x1="205.5" y1="452" x2="205.5" y2="459" stroke="#ee5864"/>
<line x1="209.5" y1="439" x2="209.5" y2="459" stroke="#ee5864"/>
<line x1="213.5" y1="435" x2="213.5" y2="459" stroke="#ee5864"/>
<line x1="217.5" y1="442" x2="217.5" y2="459" stroke="#ee5864"/>
<line x1="221.5" y1="439" x2="221.5" y2="459" stroke="#ee5864"/>
<line x1="225.5" y1="436" x2="225.5" y2="459" stroke="#ee5864"/>
<line x1="229.5" y1="432" x2="229.5" y2="459" stroke="#ee5864"/>
<line x1="233.5" y1="421" x2="233.5" y2="459" stroke="#ee5864"/>
<line x1="237.5" y1="417" x2="237.5" y2="459" stroke="#ee5864"/>
<line x1="241.5" y1="417" x2="241.5" y2="459" stroke="#ee5864"/>
<line x1="245.5" y1="423" x2="245.5" y2="459" stroke="#ee5864"/>
<line x1="249.5" y1="428" x2="249.5" y2="459" stroke="#ee5864"/>
<line x1="253.5" y1="435" x2="253.5" y2="459" stroke="#ee5864"/>
<line x1="257.5" y1="444" x2="257.5" y2="459" stroke="#ee5864"/>
<line x1="261.5" y1="452" x2="261.5" y2="459" stroke="#ee5864"/>
<line x1="265.5" y1="458" x2="265.5" y2="461" stroke="#52bd8c"/>
<line x1="269.5" y1="458" x2="269.5" y2="470" stroke="#52bd8c"/>
<line x1="273.5" y1="458" x2="273.5" y2="474" stroke="#52bd8c"/>
<line x1="277.5" y1="458" x2="277.5" y2="482" stroke="#52bd8c"/>
<line x1="281.5" y1="458" x2="281.5" y2="488" stroke="#52bd8c"/>
<line x1="285.5" y1="458" x2="285.5" y2="489" stroke="#52bd8c"/>
<line x1="289.5" y1="458" x2="289.5" y2="486" stroke="#52bd8c"/>
<line x1="293.5" y1="458" x2="293.5" y2="483" stroke="#52bd8c"/>
<line x1="297.5" y1="458" x2="297.5" y2="484" stroke="#52bd8c"/>
<line x1="301.5" y1="458" x2="301.5" y2="485" stroke="#52bd8c"/>
<line x1="305.5" y1="458" x2="305.5" y2="484" stroke="#52bd8c"/>
<line x1="309.5" y1="458" x2="309.5" y2="488" stroke="#52bd8c"/>
<line x1="313.5" y1="458" x2="313.5" y2="479" stroke="#52bd8c"/>
<line x1="317.5" y1="458" x2="317.5" y2="479" stroke="#52bd8c"/>
<line x1="321.5" y1="458" x2="321.5" y2="480" stroke="#52bd8c"/>
<line x1="325.5" y1="458" x2="325.5" y2="478" stroke="#52bd8c"/>
<line x1="329.5" y1="458" x2="329.5" y2="475" stroke="#52bd8c"/>
<line x1="333.5" y1="458" x2="333.5" y2="468" stroke="#52bd8c"/>
<line x1="337.5" y1="458" x2="337.5" y2="470" stroke="#52bd8c"/>
<line x1="341.5" y1="458" x2="341.5" y2="468" stroke="#52bd8c"/>
<line x1="345.5" y1="458" x2="345.5" y2="465" stroke="#52bd8c"/>
<line x1="349.5" y1="458" x2="349.5" y2="468" stroke="#52bd8c"/>
<line x1="353.5" y1="458" x2="353.5" y2="464" stroke="#52bd8c"/>
<line x1="357.5" y1="457" x2="357.5" y2="459" stroke="#ee5864"/>
<line x1="361.5" y1="453" x2="361.5" y2="459" stroke="#ee5864"/>
<line x1="365.5" y1="451" x2="365.5" y2="459" stroke="#ee5864"/>
<line x1="369.5" y1="448" x2="369.5" y2="459" stroke="#ee5864"/>
<line x1="373.5" y1="451" x2="373.5" y2="459" stroke="#ee5864"/>
<line x1="377.5" y1="454" x2="377.5" y2="459" stroke="#ee5864"/>
<line x1="381.5" y1="456" x2="381.5" y2="459" stroke="#ee5864"/>
<line x1="385.5" y1="458" x2="385.5" y2="459" stroke="#ee5864"/>
<line x1="389.5" y1="450" x2="389.5" y2="459" stroke="#ee5864"/>
<line x1="393.5" y1="444" x2="393.5" y2="459" stroke="#ee5864"/>
<line x1="397.5" y1="440" x2="397.5" y2="459" stroke="#ee5864"/>
<line x1="401.5" y1="430" x2="401.5" y2="459" stroke="#ee5864"/>
<line x1="405.5" y1="430" x2="405.5" y2="459" stroke="#ee5864"/>
<line x1="409.5" y1="436" x2="409.5" y2="459" stroke="#ee5864"/>
<line x1="413.5" y1="440" x2="413.5" y2="459" stroke="#ee5864"/>
<line x1="417.5" y1="443" x2="417.5" y2="459" stroke="#ee5864"/>
<line x1="421.5" y1="442" x2="421.5" y2="459" stroke="#ee5864"/>
<line x1="425.5" y1="439" x2="425.5" y2="459" stroke="#ee5864"/>
<line x1="429.5" y1="437" x2="429.5" y2="459" stroke="#ee5864"/>
<line x1="433.5" y1="437" x2="433.5" y2="459" stroke="#ee5864"/>
<line x1="437.5" y1="435" x2="437.5" y2="459" stroke="#ee5864"/>
<line x1="441.5" y1="433" x2="441.5" y2="459" stroke="#ee5864"/>
<line x1="445.5" y1="427" x2="445.5" y2="459" stroke="#ee5864"/>
<line x1="449.5" y1="425" x2="449.5" y2="459" stroke="#ee5864"/>
<line x1="453.5" y1="430" x2="453.5" y2="459" stroke="#ee5864"/>
<line x1="457.5" y1="429" x2="457.5" y2="459" stroke="#ee5864"/>
<line x1="461.5" y1="435" x2="461.5" y2="459" stroke="#ee5864"/>
<line x1="465.5" y1="443" x2="465.5" y2="459" stroke="#ee5864"/>
<line x1="469.5" y1="451" x2="469.5" y2="459" stroke="#ee5864"/>
<line x1="473.5" y1="450" x2="473.5" y2="459" stroke="#ee5864"/>
<line x1="477.5" y1="451" x2="477.5" y2="459" stroke="#ee5864"/>
<line x1="481.5" y1="440" x2="481.5" y2="459" stroke="#ee5864"/>
<line x1="485.5" y1="436" x2="485.5" y2="459" stroke="#ee5864"/>
<line x1="489.5" y1="437" x2="489.5" y2="459" stroke="#ee5864"/>
<line x1="493.5" y1="441" x2="493.5" y2="459" stroke="#ee5864"/>
<line x1="497.5" y1="446" x2="497.5" y2="459" stroke="#ee5864"/>
<line x1="501.5" y1="451" x2="501.5" y2="459" stroke="#ee5864"/>
<line x1="505.5" y1="458" x2="505.5" y2="464" stroke="#52bd8c"/>
<line x1="509.5" y1="458" x2="509.5" y2="477" stroke="#52bd8c"/>
<line x1="513.5" y1="458" x2="513.5" y2="484" stroke="#52bd8c"/>
<line x1="517.5" y1="458" x2="517.5" y2="485" stroke="#52bd8c"/>
<line x1="521.5" y1="458" x2="521.5" y2="489" stroke="#52bd8c"/>
<line x1="525.5" y1="458" x2="525.5" y2="482" stroke="#52bd8c"/>
<line x1="529.5" y1="458" x2="529.5" y2="476" stroke="#52bd8c"/>
<line x1="533.5" y1="458" x2="533.5" y2="471" stroke="#52bd8c"/>
<line x1="537.5" y1="458" x2="537.5" y2="468" stroke="#52bd8c"/>
<line x1="541.5" y1="458" x2="541.5" y2="464" stroke="#52bd8c"/>
<line x1="545.5" y1="458" x2="545.5" y2="469" stroke="#52bd8c"/>
<line x1="549.5" y1="458" x2="549.5" y2="465" stroke="#52bd8c"/>
<line x1="553.5" y1="458" x2="553.5" y2="460" stroke="#52bd8c"/>
<line x1="557.5" y1="458" x2="557.5" y2="470" stroke="#52bd8c"/>
<line x1="561.5" y1="458" x2="561.5" y2="475" stroke="#52bd8c"/>
<line x1="565.5" y1="458" x2="565.5" y2="479" stroke="#52bd8c"/>
<line x1="569.5" y1="458" x2="569.5" y2="484" stroke="#52bd8c"/>
<line x1="573.5" y1="458" x2="573.5" y2="486" stroke="#52bd8c"/>
<line x1="577.5" y1="458" x2="577.5" y2="488" stroke="#52bd8c"/>
<line x1="581.5" y1="458" x2="581.5" y2="491" stroke="#52bd8c"/>
<line x1="585.5" y1="458" x2="585.5" y2="492" stroke="#52bd8c"/>
<line x1="589.5" y1="458" x2="589.5" y2="496" stroke="#52bd8c"/>
<line x1="593.5" y1="458" x2="593.5" y2="496" stroke="#52bd8c"/>
<line x1="597.5" y1="458" x2="597.5" y2="491" stroke="#52bd8c"/>
<line x1="601.5" y1="458" x2="601.5" y2="491" stroke="#52bd8c"/>
<line x1="605.5" y1="458" x2="605.5" y2="492" stroke="#52bd8c"/>
<line x1="609.5" y1="458" x2="609.5" y2="491" stroke="#52bd8c"/>
<line x1="613.5" y1="458" x2="613.5" y2="492" stroke="#52bd8c"/>
<line x1="617.5" y1="458" x2="617.5" y2="494" stroke="#52bd8c"/>
<line x1="621.5" y1="458" x2="621.5" y2="489" stroke="#52bd8c"/>
<line x1="625.5" y1="458" x2="625.5" y2="479" stroke="#52bd8c"/>
<line x1="629.5" y1="458" x2="629.5" y2="471" stroke="#52bd8c"/>
<line x1="633.5" y1="458" x2="633.5" y2="462" stroke="#52bd8c"/>
<line x1="637.5" y1="457" x2="637.5" y2="459" stroke="#ee5864"/>
<line x1="641.5" y1="454" x2="641.5" y2="459" stroke="#ee5864"/>
<line x1="645.5" y1="453" x2="645.5" y2="459" stroke="#ee5864"/>
<line x1="649.5" y1="450" x2="649.5" y2="459" stroke="#ee5864"/>
<line x1="653.5" y1="446" x2="653.5" y2="459" stroke="#ee5864"/>
<line x1="657.5" y1="443" x2="657.5" y2="459" stroke="#ee5864"/>
<line x1="661.5" y1="441" x2="661.5" y2="459" stroke="#ee5864"/>
<line x1="665.5" y1="442" x2="665.5" y2="459" stroke="#ee5864"/>
<line x1="669.5" y1="438" x2="669.5" y2="459" stroke="#ee5864"/>
<line x1="673.5" y1="433" x2="673.5" y2="459" stroke="#ee5864"/>
<line x1="677.5" y1="429" x2="677.5" y2="459" stroke="#ee5864"/>
<line x1="681.5" y1="427" x2="681.5" y2="459" stroke="#ee5864"/>
<line x1="685.5" y1="426" x2="685.5" y2="459" stroke="#ee5864"/>
<line x1="689.5" y1="428" x2="689.5" y2="459" stroke="#ee5864"/>
<line x1="693.5" y1="432" x2="693.5" y2="459" stroke="#ee5864"/>
<line x1="697.5" y1="432" x2="697.5" y2="459" stroke="#ee5864"/>
<line x1="701.5" y1="432" x2="701.5" y2="459" stroke="#ee5864"/>
<line x1="705.5" y1="442" x2="705.5" y2="459" stroke="#ee5864"/>
<line x1="709.5" y1="445" x2="709.5" y2="459" stroke="#ee5864"/>
<line x1="713.5" y1="446" x2="713.5" y2="459" stroke="#ee5864"/>
<line x1="717.5" y1="446" x2="717.5" y2="459" stroke="#ee5864"/>
<line x1="721.5" y1="447" x2="721.5" y2="459" stroke="#ee5864"/>
<line x1="725.5" y1="449" x2="725.5" y2="459" stroke="#ee5864"/>
<line x1="729.5" y1="451" x2="729.5" y2="459" stroke="#ee5864"/>
<line x1="733.5" y1="455" x2="733.5" y2="459" stroke="#ee5864"/>
<line x1="737.5" y1="458" x2="737.5" y2="459" stroke="#52bd8c"/>
<line x1="741.5" y1="458" x2="741.5" y2="459" stroke="#52bd8c"/>
<line x1="745.5" y1="458" x2="745.5" y2="459" stroke="#52bd8c"/>
<line x1="749.5" y1="458" x2="749.5" y2="464" stroke="#52bd8c"/>
<line x1="753.5" y1="458" x2="753.5" y2="464" stroke="#52bd8c"/>
<line x1="757.5" y1="458" x2="757.5" y2="465" stroke="#52bd8c"/>
<line x1="761.5" y1="458" x2="761.5" y2="466" stroke="#52bd8c"/>
<line x1="765.5" y1="458" x2="765.5" y2="469" stroke="#52bd8c"/>
<line x1="769.5" y1="458" x2="769.5" y2="467" stroke="#52bd8c"/>
<line x1="773.5" y1="458" x2="773.5" y2="466" stroke="#52bd8c"/>
<line x1="777.5" y1="458" x2="777.5" y2="467" stroke="#52bd8c"/>
<line x1="781.5" y1="458" x2="781.5" y2="468" stroke="#52bd8c"/>
<line x1="785.5" y1="458" x2="785.5" y2="469" stroke="#52bd8c"/>
<line x1="789.5" y1="458" x2="789.5" y2="472" stroke="#52bd8c"/>
<line x1="793.5" y1="458" x2="793.5" y2="477" stroke="#52bd8c"/>
<line x1="797.5" y1="458" x2="797.5" y2="476" stroke="#52bd8c"/>
<line x1="801.5" y1="458" x2="801.5" y2="471" stroke="#52bd8c"/>
<line x1="805.5" y1="458" x2="805.5" y2="472" stroke="#52bd8c"/>
<line x1="809.5" y1="458" x2="809.5" y2="469" stroke="#52bd8c"/>
<line x1="813.5" y1="458" x2="813.5" y2="465" stroke="#52bd8c"/>
<line x1="817.5" y1="458" x2="817.5" y2="463" stroke="#52bd8c"/>
<line x1="821.5" y1="455" x2="821.5" y2="459" stroke="#ee5864"/>
<line x1="825.5" y1="453" x2="825.5" y2="459" stroke="#ee5864"/>
<line x1="829.5" y1="456" x2="829.5" y2="459" stroke="#ee5864"/>
<line x1="833.5" y1="446" x2="833.5" y2="459" stroke="#ee5864"/>
<line x1="837.5" y1="443" x2="837.5" y2="459" stroke="#ee5864"/>
<line x1="841.5" y1="445" x2="841.5" y2="459" stroke="#ee5864"/>
<line x1="845.5" y1="442" x2="845.5" y2="459" stroke="#ee5864"/>
<line x1="849.5" y1="426" x2="849.5" y2="459" stroke="#ee5864"/>
<line x1="853.5" y1="422" x2="853.5" y2="459" stroke="#ee5864"/>
<line x1="857.5" y1="421" x2="857.5" y2="459" stroke="#ee5864"/>
<line x1="861.5" y1="424" x2="861.5" y2="459" stroke="#ee5864"/>
<line x1="865.5" y1="428" x2="865.5" y2="459" stroke="#ee5864"/>
<line x1="869.5" y1="432" x2="869.5" y2="459" stroke="#ee5864"/>
<line x1="873.5" y1="431" x2="873.5" y2="459" stroke="#ee5864"/>
<line x1="877.5" y1="430" x2="877.5" y2="459" stroke="#ee5864"/>
<line x1="881.5" y1="433" x2="881.5" y2="459" stroke="#ee5864"/>
<line x1="885.5" y1="434" x2="885.5" y2="459" stroke="#ee5864"/>
<line x1="889.5" y1="439" x2="889.5" y2="459" stroke="#ee5864"/>
<line x1="893.5" y1="439" x2="893.5" y2="459" stroke="#ee5864"/>
<line x1="897.5" y1="440" x2="897.5" y2="459" stroke="#ee5864"/>
<line x1="901.5" y1="445" x2="901.5" y2="459" stroke="#ee5864"/>
<line x1="905.5" y1="449" x2="905.5" y2="459" stroke="#ee5864"/>
<line x1="909.5" y1="450" x2="909.5" y2="459" stroke="#ee5864"/>
<line x1="913.5" y1="454" x2="913.5" y2="459" stroke="#ee5864"/>
<line x1="917.5" y1="454" x2="917.5" y2="459" stroke="#ee5864"/>
<line x1="921.5" y1="454" x2="921.5" y2="459" stroke="#ee5864"/>
<line x1="925.5" y1="452" x2="925.5" y2="459" stroke="#ee5864"/>
<line x1="929.5" y1="451" x2="929.5" y2="459" stroke="#ee5864"/>
<line x1="933.5" y1="454" x2="933.5" y2="459" stroke="#ee5864"/>
<line x1="937.5" y1="457" x2="937.5" y2="459" stroke="#ee5864"/>
<line x1="941.5" y1="458" x2="941.5" y2="459" stroke="#52bd8c"/>
<line x1="945.5" y1="456" x2="945.5" y2="459" stroke="#ee5864"/>
<line x1="949.5" y1="458" x2="949.5" y2="458" stroke="#ee5864"/>
<line x1="953.5" y1="458" x2="953.5" y2="463" stroke="#52bd8c"/>
<line x1="957.5" y1="458" x2="957.5" y2="470" stroke="#52bd8c"/>
<line x1="961.5" y1="458" x2="961.5" y2="475" stroke="#52bd8c"/>
<line x1="965.5" y1="458" x2="965.5" y2="479" stroke="#52bd8c"/>
<line x1="969.5" y1="458" x2="969.5" y2="485" stroke="#52bd8c"/>
<line x1="973.5" y1="458" x2="973.5" y2="488" stroke="#52bd8c"/>
<line x1="977.5" y1="458" x2="977.5" y2="494" stroke="#52bd8c"/>
<line x1="981.5" y1="458" x2="981.5" y2="491" stroke="#52bd8c"/>
<line x1="985.5" y1="458" x2="985.5" y2="490" stroke="#52bd8c"/>
<line x1="989.5" y1="458" x2="989.5" y2="491" stroke="#52bd8c"/>
<line x1="993.5" y1="458" x2="993.5" y2="494" stroke="#52bd8c"/>
<line x1="997.5" y1="458" x2="997.5" y2="496" stroke="#52bd8c"/>
<line x1="1001.5" y1="458" x2="1001.5" y2="489" stroke="#52bd8c"/>
<line x1="1005.5" y1="458" x2="1005.5" y2="485" stroke="#52bd8c"/>
<line x1="1009.5" y1="458" x2="1009.5" y2="484" stroke="#52bd8c"/>
<line x1="1013.5" y1="458" x2="1013.5" y2="480" stroke="#52bd8c"/>
<line x1="1017.5" y1="458" x2="1017.5" y2="477" stroke="#52bd8c"/>
<line x1="1021.5" y1="458" x2="1021.5" y2="473" stroke="#52bd8c"/>
<line x1="1025.5" y1="458" x2="1025.5" y2="469" stroke="#52bd8c"/>
<line x1="1029.5" y1="458" x2="1029.5" y2="465" stroke="#52bd8c"/>
<line x1="1033.5" y1="458" x2="1033.5" y2="464" stroke="#52bd8c"/>
<line x1="1037.5" y1="458" x2="1037.5" y2="463" stroke="#52bd8c"/>
<line x1="1041.5" y1="458" x2="1041.5" y2="463" stroke="#52bd8c"/>
<polyline points="93.5,501.8 97.5,495.9 101.5,490.6 105.5,485.0 109.5,478.1 113.5,472.2 117.5,467.7 121.5,462.1 125.5,452.8 129.5,445.8 133.5,440.6 137.5,437.6 141.5,435.8 145.5,434.0 149.5,431.6 153.5,431.4 157.5,435.2 161.5,439.5 165.5,444.5 169.5,448.2 173.5,450.8 177.5,453.1 181.5,455.3 185.5,457.3 189.5,458.8 193.5,460.2 197.5,459.7 201.5,455.3 205.5,449.7 209.5,442.2 213.5,436.7 217.5,435.0 221.5,433.9 225.5,431.7 229.5,420.8 233.5,411.2 237.5,405.7 241.5,402.6 245.5,401.5 249.5,400.9 253.5,401.4 257.5,404.3 261.5,407.9 265.5,412.3 269.5,417.4 273.5,422.8 277.5,428.8 281.5,434.8 285.5,439.1 289.5,441.9 293.5,444.4 297.5,447.3 301.5,450.5 305.5,453.7 309.5,456.9 313.5,460.0 317.5,462.9 321.5,466.0 325.5,468.8 329.5,469.9 333.5,469.8 337.5,469.6 341.5,469.4 345.5,469.7 349.5,470.9 353.5,469.3 357.5,465.2 361.5,462.8 365.5,460.8 369.5,460.0 373.5,460.4 377.5,461.3 381.5,462.3 385.5,462.8 389.5,460.9 393.5,455.9 397.5,450.1 401.5,441.9 405.5,437.9 409.5,437.6 413.5,437.4 417.5,437.2 421.5,436.8 425.5,433.3 429.5,429.0 433.5,426.1 437.5,423.1 441.5,418.1 445.5,411.8 449.5,406.8 453.5,403.8 457.5,401.6 461.5,401.8 465.5,404.2 469.5,406.0 473.5,405.5 477.5,404.1 481.5,399.5 485.5,392.2 489.5,390.6 493.5,390.8 497.5,391.1 501.5,392.7 505.5,399.5 509.5,406.8 513.5,413.7 517.5,420.4 521.5,423.8 525.5,423.4 529.5,422.7 533.5,422.1 537.5,421.6 541.5,421.5 545.5,424.5 549.5,424.3 553.5,422.6 557.5,424.7 561.5,430.4 565.5,436.4 569.5,441.3 573.5,446.3 577.5,451.9 581.5,458.2 585.5,465.3 589.5,469.9 593.5,473.0 597.5,474.7 601.5,476.0 605.5,478.5 609.5,483.7 613.5,489.3 617.5,495.8 621.5,499.4 625.5,497.8 629.5,494.8 633.5,491.3 637.5,487.5 641.5,485.3 645.5,483.8 649.5,482.4 653.5,480.3 657.5,477.6 661.5,474.5 665.5,471.0 669.5,467.1 673.5,462.8 677.5,458.0 681.5,452.6 685.5,448.1 689.5,445.5 693.5,443.6 697.5,441.9 701.5,439.5 705.5,438.0 709.5,438.4 713.5,438.6 717.5,437.7 721.5,436.8 725.5,436.8 729.5,436.8 733.5,437.1 737.5,438.4 741.5,439.5 745.5,440.7 749.5,442.0 753.5,443.5 757.5,445.0 761.5,446.7 765.5,448.4 769.5,449.9 773.5,451.0 777.5,452.0 781.5,453.6 785.5,457.1 789.5,461.5 793.5,464.2 797.5,465.4 801.5,466.2 805.5,466.9 809.5,467.6 813.5,468.0 817.5,466.6 821.5,463.1 825.5,460.6 829.5,458.7 833.5,456.7 837.5,454.1 841.5,451.1 845.5,447.3 849.5,440.0 853.5,428.8 857.5,424.1 861.5,421.4 865.5,419.6 869.5,418.3 873.5,416.6 877.5,413.6 881.5,410.3 885.5,408.6 889.5,407.4 893.5,405.1 897.5,403.7 901.5,404.1 905.5,404.7 909.5,405.3 913.5,405.9 917.5,405.8 921.5,404.4 925.5,402.8 929.5,402.7 933.5,403.6 937.5,404.1 941.5,404.1 945.5,404.1 949.5,404.2 953.5,408.1 957.5,414.3 961.5,418.5 965.5,422.3 969.5,427.4 973.5,435.3 977.5,441.6 981.5,444.7 985.5,446.9 989.5,450.1 993.5,456.9 997.5,464.0 1001.5,466.7 1005.5,468.4 1009.5,469.6 1013.5,470.9 1017.5,472.0 1021.5,472.1 1025.5,471.5 1029.5,471.0 1033.5,470.7 1037.5,470.5 1041.2,470.4" fill="none" stroke="#e8e8e8" stroke-width="1"/>
<polyline points="93.5,503.8 97.5,501.6 101.5,498.8 105.5,495.4 109.5,491.2 113.5,486.8 117.5,481.9 121.5,477.0 125.5,472.3 129.5,467.9 133.5,463.6 137.5,459.1 141.5,454.4 145.5,450.1 149.5,446.3 153.5,442.7 157.5,441.5 161.5,441.7 165.5,442.0 169.5,442.7 173.5,444.3 177.5,446.3 181.5,448.2 185.5,449.8 189.5,451.7 193.5,453.4 197.5,454.4 201.5,454.2 205.5,452.3 209.5,449.7 213.5,447.3 217.5,445.5 221.5,443.8 225.5,441.6 229.5,438.4 233.5,433.1 237.5,427.3 241.5,422.6 245.5,418.0 249.5,414.1 253.5,412.0 257.5,411.3 261.5,410.9 265.5,410.7 269.5,411.5 273.5,413.4 277.5,415.7 281.5,419.1 285.5,423.6 289.5,427.8 293.5,431.4 297.5,434.9 301.5,438.3 305.5,441.4 309.5,444.2 313.5,446.8 317.5,449.4 321.5,452.3 325.5,455.5 329.5,458.8 333.5,461.3 337.5,463.1 341.5,464.5 345.5,465.6 349.5,466.7 353.5,467.4 357.5,467.3 361.5,466.3 365.5,464.9 369.5,464.0 373.5,463.7 377.5,463.4 381.5,463.2 385.5,462.9 389.5,461.9 393.5,460.1 397.5,457.8 401.5,455.3 405.5,453.0 409.5,451.0 413.5,448.9 417.5,446.8 421.5,444.6 425.5,442.3 429.5,439.7 433.5,436.9 437.5,433.7 441.5,430.4 445.5,427.0 449.5,423.0 453.5,418.4 457.5,414.1 461.5,410.8 465.5,409.2 469.5,408.4 473.5,407.8 477.5,406.6 481.5,404.2 485.5,401.2 489.5,398.7 493.5,397.5 497.5,397.0 501.5,396.7 505.5,396.7 509.5,398.6 513.5,402.0 517.5,406.0 521.5,409.5 525.5,412.1 529.5,414.3 533.5,416.2 537.5,417.4 541.5,418.2 545.5,418.8 549.5,419.6 553.5,420.5 557.5,422.1 561.5,424.4 565.5,427.1 569.5,430.2 573.5,434.0 577.5,437.9 581.5,441.6 585.5,445.1 589.5,448.7 593.5,452.8 597.5,457.6 601.5,462.6 605.5,467.0 609.5,471.2 613.5,475.1 617.5,479.1 621.5,483.6 625.5,487.0 629.5,487.8 633.5,488.1 637.5,488.3 641.5,488.0 645.5,486.5 649.5,484.6 653.5,483.1 657.5,481.6 661.5,479.9 665.5,477.9 669.5,475.7 673.5,473.0 677.5,469.7 681.5,465.5 685.5,461.3 689.5,457.4 693.5,453.4 697.5,450.3 701.5,448.2 705.5,446.7 709.5,445.2 713.5,443.5 717.5,441.6 721.5,440.0 725.5,439.1 729.5,439.1 733.5,439.1 737.5,439.1 741.5,439.1 745.5,439.1 749.5,439.8 753.5,441.3 757.5,442.7 761.5,443.9 765.5,444.9 769.5,446.0 773.5,447.2 777.5,448.6 781.5,450.0 785.5,451.6 789.5,453.1 793.5,454.7 797.5,456.5 801.5,458.4 805.5,459.9 809.5,461.1 813.5,462.1 817.5,462.7 821.5,462.8 825.5,462.8 829.5,462.1 833.5,460.3 837.5,458.1 841.5,456.2 845.5,453.9 849.5,451.2 853.5,447.1 857.5,441.8 861.5,436.8 865.5,432.4 869.5,428.3 873.5,424.7 877.5,421.7 881.5,418.9 885.5,416.5 889.5,414.1 893.5,412.0 897.5,410.6 901.5,409.6 905.5,408.8 909.5,408.2 913.5,407.6 917.5,406.9 921.5,406.2 925.5,405.4 929.5,404.9 933.5,404.8 937.5,404.8 941.5,404.8 945.5,404.8 949.5,404.8 953.5,404.8 957.5,405.7 961.5,407.9 965.5,410.7 969.5,414.4 973.5,419.2 977.5,423.9 981.5,428.3 985.5,432.6 989.5,436.9 993.5,441.1 997.5,445.3 1001.5,449.3 1005.5,452.9 1009.5,456.4 1013.5,459.4 1017.5,461.5 1021.5,463.2 1025.5,464.6 1029.5,465.9 1033.5,467.0 1037.5,468.0 1041.2,468.7" fill="none" stroke="#dede1e" stroke-width="1"/>
</g>
</svg>

<!-- header -->
<div class="a" style="left:92px;top:3px;font-size:12px;line-height:14px;color:#e6e6e6">美元指数<span style="color:#ff7a1a">【240分】</span></div>
<svg class="a" style="left:197px;top:6px" width="11" height="11"><circle cx="5" cy="5.5" r="4.3" fill="none" stroke="#ff7a1a" stroke-width="0.9"/><path d="M5 1v9M0.7 5.5h8.6" stroke="#ff7a1a" stroke-width="0.9"/></svg>
<svg class="a" style="left:215px;top:1px" width="14" height="14" shape-rendering="crispEdges"><rect x="1" y="1" width="12" height="12" fill="#8a8a8a"/><rect x="0.5" y="0.5" width="11" height="11" fill="#fff" stroke="#0a0ab0"/><polyline points="1,7 4,3 7,6 9,4 11,4" fill="none" stroke="#f00"/><polyline points="1,10 4,6 7,9 9,7 11,7" fill="none" stroke="#00f"/></svg>
<div class="a" style="left:229px;top:3px;font-size:12px;line-height:14px;color:#e6e6e6">BOLL(20,2) <span style="letter-spacing:0.3px">MID:99.6665</span></div>
<div class="a" style="left:376px;top:3px;font-size:12px;line-height:14px;color:#d2d21e">UPPER:99.9249</div>
<div class="a" style="left:470px;top:3px;font-size:12px;line-height:14px;color:#d42ed8">LOWER:99.4081</div>

<!-- top right icons -->
<div class="a" style="left:1005px;top:0;width:65px;height:17px;background:#0a0a0a"></div>
<svg class="a" style="left:1005px;top:0" width="65" height="17">
<g fill="none" stroke="#b4b4b4">
<rect x="1.5" y="1.5" width="13" height="13"/><rect x="17.5" y="1.5" width="13" height="13"/><rect x="33.5" y="1.5" width="13" height="13"/><rect x="49.5" y="1.5" width="13" height="13"/>
</g>
<g fill="#a8a8a8">
<rect x="7" y="4" width="2" height="2"/><rect x="7" y="7" width="2" height="2"/><rect x="7" y="10" width="2" height="2"/><rect x="4" y="7" width="2" height="2"/><rect x="10" y="7" width="2" height="2"/>
</g>
<g stroke="#a8a8a8" fill="none">
<path d="M20.5 4v8M19.5 5l1-1 1 1M20 12.5h8M27 11.5l1 1-1 1M23.5 5v5"/><path d="M27 5l-3 2.5 3 2.5z" fill="#a8a8a8"/>
<path d="M36.5 4v8M35.5 5l1-1 1 1M36 12.5h8M43 11.5l1 1-1 1"/><path d="M39 5l5 3-5 3z" fill="#a8a8a8"/>
<rect x="52.5" y="3.5" width="3" height="9"/><path d="M56 8h4M58.5 6l2 2-2 2"/>
</g>
</svg>

<!-- left axis labels -->
<div class="ll" style="top:14px">100.7843</div>
<div class="ll" style="top:71px">100.0481</div>
<div class="ll" style="top:129px">99.3119</div>
<div class="ll" style="top:187px">98.5757</div>
<div class="ll" style="top:244px">97.8395</div>
<div class="ll" style="top:302px">97.1033</div>
<!-- right axis labels -->
<div class="lbl" style="left:1072.5px;top:14px">100.7843</div>
<div class="lbl" style="left:1072.5px;top:71px">100.0481</div>
<div class="lbl" style="left:1072.5px;top:129px">99.3119</div>
<div class="lbl" style="left:1072.5px;top:187px">98.5757</div>
<div class="lbl" style="left:1072.5px;top:244px">97.8395</div>
<div class="lbl" style="left:1072.5px;top:302px">97.1033</div>

<!-- current price box -->
<div class="a" style="left:1069px;top:119px;width:67px;height:16px;background:#000;border:1px solid #f0a030;color:#f0a030;font-size:12px;line-height:16px;padding-left:3px;box-sizing:content-box;width:64px;">99.5447</div>
<svg class="a" style="left:1128px;top:110px" width="10" height="10"><rect width="10" height="10" fill="#000"/><path d="M1 5l4-4 4 4zM1 9l4-4 4 4z" fill="#f0a030"/></svg>

<!-- extrema labels -->
<div class="a" style="left:490px;top:104px;font-size:12px;line-height:14px;font-weight:bold;color:#e8424e;letter-spacing:0.2px">99.5549</div>
<div class="a" style="left:955px;top:41px;font-size:12px;line-height:14px;font-weight:bold;color:#e8424e">100.3599</div>
<div class="a" style="left:110px;top:333px;font-size:12px;line-height:14px;font-weight:bold;color:#4cc08e;letter-spacing:0.4px">96.8229</div>

<!-- MACD header -->
<svg class="a" style="left:20px;top:366px" width="18" height="18" shape-rendering="crispEdges">
<g fill="#ff1010"><rect x="8" y="2" width="1" height="2"/><rect x="8" y="14" width="1" height="2"/><rect x="2" y="8" width="2" height="1"/><rect x="14" y="8" width="2" height="1"/>
<rect x="3" y="3" width="1" height="1"/><rect x="4" y="4" width="1" height="1"/><rect x="13" y="3" width="1" height="1"/><rect x="12" y="4" width="1" height="1"/>
<rect x="3" y="13" width="1" height="1"/><rect x="4" y="12" width="1" height="1"/><rect x="13" y="13" width="1" height="1"/><rect x="12" y="12" width="1" height="1"/></g>
<g shape-rendering="auto"><circle cx="8.5" cy="8.5" r="3.8" fill="#fff" stroke="#000" stroke-width="1.2"/><circle cx="8.5" cy="8.5" r="2" fill="#f00"/></g>
</svg>
<div class="a" style="left:92px;top:371px;font-size:12px;line-height:14px;color:#e6e6e6;letter-spacing:0.17px">MACD(26,12,9) DIFF:-0.0597</div>
<div class="a" style="left:261px;top:371px;font-size:12px;line-height:14px;color:#d2d21e;letter-spacing:0.2px">DEA:-0.0493</div>
<div class="a" style="left:340px;top:371px;font-size:12px;line-height:14px;color:#dc3cdc;letter-spacing:0.3px">MACD:-0.0208</div>

<div class="ll" style="top:382px">0.3152</div>
<div class="ll" style="top:405px">0.2078</div>
<div class="ll" style="top:428px">0.1003</div>
<div class="ll" style="top:451px">-0.0072</div>
<div class="ll" style="top:474px">-0.1147</div>
<div class="lbl" style="left:1072.5px;top:382px">0.3152</div>
<div class="lbl" style="left:1072.5px;top:405px">0.2078</div>
<div class="lbl" style="left:1072.5px;top:428px">0.1003</div>
<div class="lbl" style="left:1072.5px;top:451px">-0.0072</div>
<div class="lbl" style="left:1072.5px;top:474px">-0.1147</div>

<!-- date row -->
<div class="a" style="left:29.5px;top:509px;font-size:13px;line-height:15px;font-weight:bold;color:#ff6a00">240分</div>
<svg class="a" style="left:68px;top:511px" width="10" height="10"><path d="M1 9L5 1L9 9Z" fill="#ff6a00"/></svg>
<div class="a" style="left:111px;top:507px;font-size:12px;line-height:14px;font-weight:bold;color:#f0f0f0">09/19</div>
<div class="a" style="left:267px;top:507px;font-size:12px;line-height:14px;font-weight:bold;color:#f0f0f0">09/29</div>
<div class="a" style="left:436px;top:507px;font-size:12px;line-height:14px;font-weight:bold;color:#f0f0f0">10/08</div>
<div class="a" style="left:608px;top:507px;font-size:12px;line-height:14px;font-weight:bold;color:#f0f0f0">10/17</div>
<div class="a" style="left:764px;top:507px;font-size:12px;line-height:14px;font-weight:bold;color:#f0f0f0">10/27</div>
<div class="a" style="left:927px;top:507px;font-size:12px;line-height:14px;font-weight:bold;color:#f0f0f0">11/05</div>

<!-- watermark -->
<div class="a" style="left:1010px;top:488px;font-size:32px;line-height:34px;color:#e4e8f0;letter-spacing:1.2px;-webkit-text-stroke:0.6px #1a1a1a">FX678</div>

<!-- toolbar -->
<div class="tb" style="left:20px;width:39px;background:#ff6a00;color:#fff;font-family:'Liberation Sans',sans-serif;font-size:13px;border:none">指标</div>
<div class="tb" style="left:59px;width:41px;color:#fff;font-family:'Liberation Sans',sans-serif;font-size:13px;">模板</div>
<div class="tb" style="left:100px;width:57px;color:#ff6a00;font-size:11px;">VIP指标</div>
<div class="tb" style="left:157px;width:28px;">MA</div>
<div class="tb" style="left:185px;width:41px;">MACD</div>
<div class="tb" style="left:226px;width:39px;">BIAS</div>
<div class="tb" style="left:265px;width:35px;">CCI</div>
<div class="tb" style="left:300px;width:34px;">KDJ</div>
<div class="tb" style="left:334px;width:40px;">LW&amp;</div>
<div class="tb" style="left:374px;width:34px;">RSI</div>
<div class="tb" style="left:408px;width:28px;">CR</div>
<div class="tb" style="left:436px;width:33px;">PSY</div>
<div class="tb" style="left:469px;width:41px;">BOLL</div>
<div class="tb" style="left:510px;width:33px;">VOL</div>
<div class="tb" style="left:543px;width:35px;">OBV</div>
<div class="tb" style="left:578px;width:38px;font-family:'Liberation Sans',sans-serif;font-size:13px;">设置</div>
</body></html>
